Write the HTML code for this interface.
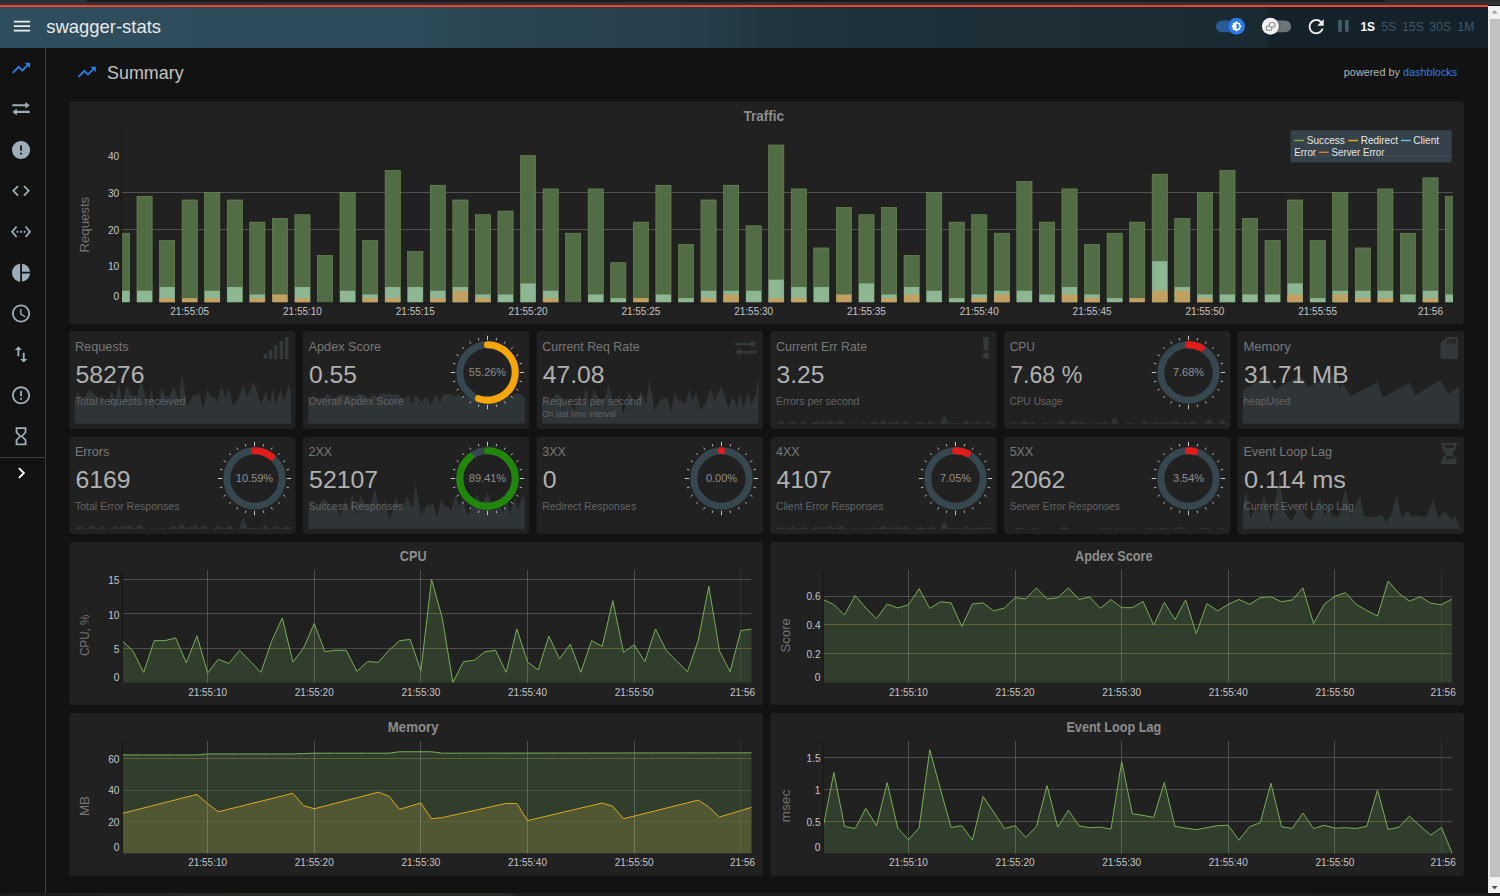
<!DOCTYPE html>
<html lang="en"><head><meta charset="utf-8"><title>swagger-stats</title>
<style>
html,body{margin:0;padding:0}
body{width:1500px;height:896px;overflow:hidden;background:#121212;position:relative;font-family:"Liberation Sans", Arial, sans-serif}
.card{position:absolute;background:#212121;border-radius:3.700px}
svg{position:absolute;left:0;top:0}
svg text{font-family:"Liberation Sans", Arial, sans-serif}
</style></head><body>
<div style="position:absolute;left:0;top:0;width:1500px;height:5px;background:#303335"></div>
<div style="position:absolute;left:0;top:0;width:1500px;height:1.600px;background:linear-gradient(90deg,#27343b 0,#27343b 85px,#1b1b1d 88px,#1b1b1d 1383px,#2c2c2c 1387px,#2c2c2c 1500px)"></div>
<div style="position:absolute;left:0;top:4.700px;width:1488px;height:2.500px;background:#f3412f"></div>
<div style="position:absolute;left:0;top:7.200px;width:1488px;height:40.600px;background:linear-gradient(90deg,#2f4e5d 0,#2e4c5a 400px,#2b4754 470px,#29434f 560px,#273f4b 700px,#22363f 760px,#1e3039 900px,#1d2e37 1050px,#1a2a32 1265px,#16222a 1272px,#15212a 1488px)"></div>
<div style="position:absolute;left:1488px;top:6px;width:12px;height:887px;background:#f1f1f1"></div>
<div style="position:absolute;left:1489.500px;top:19px;width:10.500px;height:858px;background:#c1c1c1"></div>
<div style="position:absolute;left:0;top:893px;width:1500px;height:3px;background:linear-gradient(90deg,#1b1b1b 0,#2a2a22 250px,#2c2a22 500px,#1d1d1d 520px,#1b1b1b 1500px)"></div>
<div style="position:absolute;left:0;top:47.800px;width:45px;height:845.200px;background:#121212;border-right:1px solid #3a3f43"></div>
<div style="position:absolute;left:0;top:457px;width:45px;height:1px;background:#3a3f43"></div>
<svg width="1500" height="896" viewBox="0 0 1500 896">
<rect x="69.2" y="101.3" width="1394.9" height="222.5" rx="3.700" fill="#212121"/>
<rect x="69.2" y="330.9" width="226.4" height="98.1" rx="3.700" fill="#212121"/>
<rect x="69.2" y="436.9" width="226.4" height="97" rx="3.700" fill="#212121"/>
<rect x="302.9" y="330.9" width="226.4" height="98.1" rx="3.700" fill="#212121"/>
<rect x="302.9" y="436.9" width="226.4" height="97" rx="3.700" fill="#212121"/>
<rect x="536.6" y="330.9" width="226.4" height="98.1" rx="3.700" fill="#212121"/>
<rect x="536.6" y="436.9" width="226.4" height="97" rx="3.700" fill="#212121"/>
<rect x="770.3" y="330.9" width="226.4" height="98.1" rx="3.700" fill="#212121"/>
<rect x="770.3" y="436.9" width="226.4" height="97" rx="3.700" fill="#212121"/>
<rect x="1004" y="330.9" width="226.4" height="98.1" rx="3.700" fill="#212121"/>
<rect x="1004" y="436.9" width="226.4" height="97" rx="3.700" fill="#212121"/>
<rect x="1237.7" y="330.9" width="226.4" height="98.1" rx="3.700" fill="#212121"/>
<rect x="1237.7" y="436.9" width="226.4" height="97" rx="3.700" fill="#212121"/>
<rect x="69.2" y="542.1" width="693.9" height="162.9" rx="3.700" fill="#212121"/>
<rect x="770.1" y="542.1" width="694" height="162.9" rx="3.700" fill="#212121"/>
<rect x="69.2" y="713.1" width="693.9" height="162.8" rx="3.700" fill="#212121"/>
<rect x="770.1" y="713.1" width="694" height="162.8" rx="3.700" fill="#212121"/>
<path d="M1491.5 13.500l3-3.500 3 3.500z" fill="#a3a3a3"/>
<path d="M1491.500 886l3 3.500 3-3.500z" fill="#505050"/>
<path transform="translate(11.15 15.25) scale(0.9)" fill="#ececec" d="M3 18h18v-2H3v2zm0-5h18v-2H3v2zm0-7v2h18V6H3z" />
<text x="46.3" y="32.8" font-size="18.4" fill="#e8e8e8" font-weight="normal" text-anchor="start" textLength="114.72" lengthAdjust="spacingAndGlyphs">swagger-stats</text>
<path transform="translate(10.25 57.35) scale(0.9)" fill="#2b7de9" d="M16 6l2.29 2.29-4.88 4.88-4-4L2 16.59 3.41 18l6-6 4 4 6.3-6.29L22 12V6z" />
<path transform="translate(12.400 101.900) scale(0.790 0.820)" fill="#9eaeb8" d="M0 2.800h16.400v-2.800l5.600 4-5.600 4.200v-3h-16.400z M22 10.800h-16.400v-2.800l-5.600 4.200 5.600 4v-2.600h16.400z"/>
<path transform="translate(10.25 139.15) scale(0.9)" fill="#9eaeb8" d="M12 2C6.48 2 2 6.48 2 12s4.48 10 10 10 10-4.48 10-10S17.52 2 12 2zm1 15h-2v-2h2v2zm0-4h-2V7h2v6z" />
<path transform="translate(10.25 180.05) scale(0.9)" fill="#9eaeb8" d="M9.4 16.6L4.8 12l4.6-4.6L8 6l-6 6 6 6 1.4-1.4zm5.2 0l4.6-4.6-4.6-4.6L16 6l6 6-6 6-1.4-1.4z" />
<path transform="translate(10.25 220.95) scale(0.9)" fill="#9eaeb8" d="M7.77 6.76L6.23 5.48.82 12l5.41 6.52 1.54-1.28L3.42 12l4.35-5.24zM7 13h2v-2H7v2zm10-2h-2v2h2v-2zm-6 2h2v-2h-2v2zm6.77-7.52l-1.54 1.28L20.58 12l-4.35 5.24 1.54 1.28L23.18 12l-5.41-6.52z" />
<path transform="translate(10.25 261.85) scale(0.9)" fill="#9eaeb8" d="M11 2v20c-5.07-.5-9-4.79-9-10s3.93-9.5 9-10zm2.03 0v8.99H22c-.47-4.74-4.24-8.52-8.97-8.99zm0 11.01V22c4.74-.47 8.5-4.25 8.97-8.99h-8.97z" />
<path transform="translate(10.25 302.75) scale(0.9)" fill="#9eaeb8" d="M11.99 2C6.47 2 2 6.48 2 12s4.47 10 9.99 10C17.52 22 22 17.52 22 12S17.52 2 11.99 2zM12 20c-4.42 0-8-3.58-8-8s3.58-8 8-8 8 3.58 8 8-3.58 8-8 8zm.5-13H11v6l5.25 3.15.75-1.23-4.5-2.67z" />
<path transform="translate(10.25 343.65) scale(0.9)" fill="#9eaeb8" d="M9 3L5 6.99h3V14h2V6.99h3L9 3zm7 14.01V10h-2v7.01h-3L15 21l4-3.99h-3z" />
<path transform="translate(10.25 384.55) scale(0.9)" fill="#9eaeb8" d="M11 15h2v2h-2zm0-8h2v6h-2zm.99-5C6.47 2 2 6.48 2 12s4.47 10 9.99 10C17.52 22 22 17.52 22 12S17.52 2 11.99 2zM12 20c-4.42 0-8-3.58-8-8s3.58-8 8-8 8 3.58 8 8-3.58 8-8 8z" />
<path transform="translate(10.25 425.45) scale(0.9)" fill="#9eaeb8" d="M6 2v6h.01L6 8.01 10 12l-4 4 .01.01H6V22h12v-5.990h-.01L18 16l-4-4 4-3.990-.01-.01H18V2H6zm10 14.5V20H8v-3.500l4-4 4 4zm-4-5l-4-4V4h8v3.500l-4 4z" />
<path transform="translate(10.4 462) scale(0.92)" fill="#ffffff" d="M10 6L8.59 7.41 13.17 12l-4.58 4.59L10 18l6-6z" />
<rect x="1216" y="20.400" width="29" height="11.800" rx="5.900" fill="#2a5b97"/>
<circle cx="1236.500" cy="26.700" r="9.200" fill="#0d1820" opacity="0.350"/>
<circle cx="1236.500" cy="26.300" r="8.500" fill="#2a7be4"/>
<path transform="translate(1231 20.8) scale(0.46)" fill="#ffffff" d="M20 15.31L23.31 12 20 8.69V4h-4.690L12 .69 8.690 4H4v4.690L.69 12 4 15.310V20h4.690L12 23.310 15.310 20H20v-4.690zM12 18V6c3.310 0 6 2.690 6 6s-2.690 6-6 6z" />
<rect x="1262" y="20.400" width="29" height="11.800" rx="5.900" fill="#6d757b"/>
<circle cx="1270.400" cy="26.800" r="9.200" fill="#0a1218" opacity="0.400"/>
<circle cx="1270.400" cy="26.300" r="8.500" fill="#f0f0f0"/>
<g fill="none" stroke="#8e8e8e" stroke-width="1.100"><rect x="1266.300" y="26" width="5.500" height="4.200" rx="1"/><rect x="1269.400" y="22.800" width="5.500" height="4.200" rx="1.300" fill="#f0f0f0"/></g>
<path transform="translate(1304.95 15.35) scale(0.94)" fill="#ececec" d="M17.65 6.35C16.2 4.9 14.21 4 12 4c-4.42 0-7.99 3.58-7.99 8s3.57 8 7.99 8c3.73 0 6.84-2.55 7.73-6h-2.08c-.82 2.33-3.04 4-5.65 4-3.31 0-6-2.69-6-6s2.69-6 6-6c1.66 0 3.14.69 4.22 1.78L13 11h7V4l-2.350 2.350z" />
<path transform="translate(1333.25 15.65) scale(0.85)" fill="#44606d" d="M6 19h4V5H6v14zm8-14v14h4V5h-4z" />
<text x="1360.4" y="30.5" font-size="12" fill="#ffffff" font-weight="bold" text-anchor="start">1S</text>
<text x="1381.5" y="30.5" font-size="12" fill="#3f5866" font-weight="normal" text-anchor="start">5S</text>
<text x="1402.3" y="30.5" font-size="12" fill="#3f5866" font-weight="normal" text-anchor="start">15S</text>
<text x="1429.6" y="30.5" font-size="12" fill="#3f5866" font-weight="normal" text-anchor="start">30S</text>
<text x="1457.5" y="30.5" font-size="12" fill="#3f5866" font-weight="normal" text-anchor="start">1M</text>
<path transform="translate(75.95 61.35) scale(0.9)" fill="#2b7de9" d="M16 6l2.29 2.29-4.88 4.88-4-4L2 16.59 3.41 18l6-6 4 4 6.3-6.29L22 12V6z" />
<text x="107.1" y="78.5" font-size="18" fill="#c2c2c2" font-weight="normal" text-anchor="start" textLength="76.52" lengthAdjust="spacingAndGlyphs">Summary</text>
<text x="1343.82" y="75.700" font-size="11" textLength="113.38" lengthAdjust="spacingAndGlyphs" fill="#b5b5b5">powered by <tspan fill="#2f7de8">dashblocks</tspan></text>
<path d="M74.57 423.7L74.57 401.41L77.64 391.44L80.7 398.34L84.54 396.81L89.14 389.14L93.74 392.98L97.57 398.34L102.18 396.04L106.78 407.55L111.38 390.67L115.21 401.41L118.59 383.01L122.11 404.48L126.72 386.07L131.32 394.51L136.68 396.81L141.29 380.71L145.89 398.34L148.95 401.41L151.56 389.14L155.86 410.61L161.99 387.61L167.36 401.41L173.49 386.84L178.86 399.88L181.93 374.57L187.3 406.01L193.43 394.51L195.73 396.04L199.57 393.74L203.4 408.31L207.24 389.91L211.84 397.58L214.14 396.81L217.21 401.41L221.81 386.07L225.64 397.58L228.71 388.37L233.31 406.01L237.91 399.88L243.28 384.54L247.11 396.81L254.02 382.24L260.92 403.71L265.52 392.21L269.35 403.71L272.73 389.14L276.26 404.48L280.55 388.37L283.92 401.41L288.53 384.54L291.13 389.91L291.13 423.7Z" fill="#2f3437"/>
<path d="M308.2 423.7L308.2 396.61L311.34 397.21L314.48 397.48L317.62 398.21L320.76 397.2L323.9 398.11L327.03 393.65L330.17 395.83L333.31 398.22L336.45 396.74L339.59 395L342.73 394.07L345.87 395.85L349.01 394.73L352.15 396.22L355.29 396.37L358.43 393.57L361.57 394.58L364.7 394.9L367.84 398.08L370.98 397.33L374.12 394.3L377.26 397.49L380.4 394.19L383.54 393.59L386.68 394.13L389.82 393.51L392.96 394.86L396.1 394.55L399.23 394.58L402.37 398.41L405.51 397.86L408.65 394.95L411.79 405.31L414.93 396.2L418.07 396.89L421.21 401.52L424.35 398.2L427.49 396.95L430.63 405.33L433.77 397.97L436.9 394.99L440.04 402.31L443.18 394.33L446.32 394.23L449.46 393.83L452.6 395.01L455.74 396.52L458.88 393.52L462.02 396.89L465.16 395.19L468.3 395.05L471.43 397.59L474.57 395.9L477.71 395.08L480.85 395.91L483.99 397.02L487.13 393.79L490.27 398.38L493.41 393.61L496.55 397.25L499.69 397.72L502.83 393.59L505.97 397.44L509.1 395.33L512.24 396.39L515.38 393.55L518.52 393.73L521.66 394.4L524.8 398.28L524.8 423.7Z" fill="#2f3437"/>
<path d="M541.97 423.7L541.97 405.21L545.04 395.24L548.1 402.14L551.94 400.61L556.54 392.94L561.14 396.78L564.97 402.14L569.58 399.84L574.18 411.35L578.78 394.47L582.61 405.21L585.99 386.81L589.51 408.28L594.12 389.87L598.72 398.31L604.08 400.61L608.69 384.51L613.29 402.14L616.35 405.21L618.96 392.94L623.26 414.41L629.39 391.41L634.76 405.21L640.89 390.64L646.26 403.68L649.33 378.37L654.7 409.81L660.83 398.31L663.13 399.84L666.97 397.54L670.8 412.11L674.64 393.71L679.24 401.38L681.54 400.61L684.61 405.21L689.21 389.87L693.04 401.38L696.11 392.17L700.71 409.81L705.31 403.68L710.68 388.34L714.51 400.61L721.42 386.04L728.32 407.51L732.92 396.01L736.75 407.51L740.13 392.94L743.66 408.28L747.95 392.17L751.32 405.21L755.93 393.34L758.53 377.4L758.53 423.7Z" fill="#2f3437"/>
<path d="M775.67 423.7L775.67 423.7L776.66 423.43L777.65 422.93L778.63 422.43L779.62 421.92L780.61 421.42L781.6 421.49L782.59 421.99L783.58 422.5L784.57 423L785.56 423.5L786.55 423.7L787.53 423.44L788.52 422.96L789.51 422.47L790.5 421.98L791.49 421.49L792.48 421L793.47 421.43L794.46 421.92L795.45 422.41L796.43 422.9L797.42 423.38L798.41 423.7L799.4 423.63L800.39 423.05L801.38 422.47L802.37 421.89L803.36 421.41L804.35 421.99L805.33 422.57L806.32 423.15L807.31 423.7L808.3 423.7L809.29 423.7L810.28 423.7L811.27 423.48L812.26 423.04L813.25 422.59L814.23 422.14L815.22 421.7L816.21 421.25L817.2 421.61L818.19 422.05L819.18 422.5L820.17 422.95L821.16 422.49L822.15 422.02L823.13 421.55L824.12 421.95L825.11 422.42L826.1 422.68L827.09 422.2L828.08 421.72L829.07 421.24L830.06 420.76L831.05 421.18L832.03 421.66L833.02 422.14L834.01 422.62L835 423.1L835.99 423.16L836.98 422.6L837.97 422.05L838.96 421.49L839.95 420.93L840.93 420.47L841.92 421.03L842.91 421.58L843.9 422.14L844.89 422.69L845.88 423.25L846.87 423.7L847.86 423.7L848.85 423.7L849.83 423.7L850.82 423.7L851.81 423.58L852.8 423.27L853.79 422.95L854.78 423.2L855.77 423.52L856.76 423.7L857.75 423.7L858.73 423.7L859.72 423.7L860.71 423.45L861.7 423.16L862.69 422.87L863.68 422.58L864.67 422.77L865.66 423.06L866.64 423.35L867.63 423.64L868.62 423.65L869.61 423.32L870.6 422.99L871.59 422.67L872.58 422.34L873.57 422.01L874.56 421.68L875.54 421.99L876.53 422.31L877.52 422.64L878.51 422.97L879.5 422.79L880.49 421.95L881.48 421.12L882.47 420.28L883.46 420.16L884.44 421L885.43 421.84L886.42 422.68L887.41 423.47L888.4 423.05L889.39 422.63L890.38 422.21L891.37 421.79L892.36 422.13L893.34 422.55L894.33 422.89L895.32 421.98L896.31 421.06L897.3 421.01L898.29 421.93L899.28 422.84L900.27 423.44L901.26 422.95L902.24 422.47L903.23 421.98L904.22 421.49L905.21 421L906.2 421.43L907.19 421.92L908.18 422.41L909.17 422.9L910.16 423.39L911.14 423.7L912.13 423.7L913.12 423.7L914.11 423.46L915.1 423.12L916.09 422.79L917.08 422.45L918.07 422.12L919.06 421.78L920.04 421.59L921.03 421.92L922.02 422.26L923.01 422.59L924 422.93L924.99 423.26L925.98 423.53L926.97 422.98L927.96 422.43L928.94 421.88L929.93 421.33L930.92 421.16L931.91 421.71L932.9 422.26L933.89 422.81L934.88 423.36L935.87 423.7L936.86 423.7L937.84 423.7L938.83 423.7L939.82 423.7L940.81 422.41L941.8 420.17L942.79 417.94L943.78 415.7L944.77 415.21L945.76 417.45L946.74 419.68L947.73 421.92L948.72 423.04L949.71 422.89L950.7 422.79L951.69 422.94L952.68 423.09L953.67 423.24L954.66 423.4L955.64 423.35L956.63 423.18L957.62 423.02L958.61 422.99L959.6 423.16L960.59 423.33L961.58 423.5L962.57 423.66L963.56 422.88L964.54 422L965.53 421.12L966.52 420.61L967.51 421.49L968.5 422.37L969.49 423.25L970.48 423.7L971.47 423.53L972.45 423.23L973.44 422.93L974.43 422.63L975.42 422.34L976.41 422.04L977.4 421.76L978.39 422.06L979.38 422.36L980.37 422.66L981.35 422.96L982.34 423.26L983.33 423.56L984.32 423.19L985.31 422.75L986.3 422.31L987.29 421.87L988.28 421.6L989.27 422.04L990.25 422.48L991.24 422.92L992.23 423.36L992.23 423.7Z" fill="#2f3437"/>
<path d="M1009.37 423.7L1009.37 423.45L1010.36 423.13L1011.35 422.81L1012.33 422.48L1013.32 422.24L1014.31 422.56L1015.3 422.88L1016.29 423.21L1017.28 423.53L1018.27 423.53L1019.26 423.18L1020.25 422.82L1021.23 422.47L1022.22 422.12L1023.21 421.76L1024.2 421.59L1025.19 421.95L1026.18 422.3L1027.17 422.66L1028.16 423.01L1029.15 423.16L1030.13 422.78L1031.12 422.39L1032.11 422L1033.1 422.18L1034.09 422.57L1035.08 422.96L1036.07 423.34L1037.06 423.7L1038.05 423.7L1039.03 423.6L1040.02 423.41L1041.01 423.23L1042 423.04L1042.99 422.86L1043.98 422.67L1044.97 422.48L1045.96 422.5L1046.95 422.69L1047.93 422.88L1048.92 423.06L1049.91 423.25L1050.9 423.43L1051.89 423.62L1052.88 423.7L1053.87 423.7L1054.86 423.7L1055.85 423.7L1056.83 423.37L1057.82 422.77L1058.81 422.16L1059.8 421.55L1060.79 420.95L1061.78 420.66L1062.77 421.27L1063.76 421.88L1064.75 422.48L1065.73 423.09L1066.72 423.7L1067.71 423.67L1068.7 423.22L1069.69 422.77L1070.68 422.32L1071.67 421.87L1072.66 421.42L1073.65 420.96L1074.63 421.29L1075.62 421.74L1076.61 422.19L1077.6 422.64L1078.59 423.09L1079.58 423.23L1080.57 422.85L1081.56 422.46L1082.55 422.07L1083.53 422.11L1084.52 422.5L1085.51 422.89L1086.5 423.27L1087.49 423.66L1088.48 423.7L1089.47 423.7L1090.46 423.7L1091.45 423.7L1092.43 423.49L1093.42 423.28L1094.41 423.07L1095.4 422.86L1096.39 422.65L1097.38 422.44L1098.37 422.57L1099.36 422.78L1100.34 422.99L1101.33 423.2L1102.32 422.89L1103.31 422.42L1104.3 421.94L1105.29 421.53L1106.28 422L1107.27 422.48L1108.26 422.95L1109.24 423.42L1110.23 423.7L1111.22 422.87L1112.21 421.13L1113.2 419.4L1114.19 417.66L1115.18 417.48L1116.17 419.21L1117.16 420.95L1118.14 422.68L1119.13 423.7L1120.12 423.7L1121.11 423.7L1122.1 423.7L1123.09 423.7L1124.08 423.7L1125.07 423.58L1126.06 423.41L1127.04 423.24L1128.03 423.07L1129.02 422.9L1130.01 422.72L1131 422.55L1131.99 422.62L1132.98 422.79L1133.97 422.96L1134.96 423.14L1135.94 423.31L1136.93 423.48L1137.92 423.65L1138.91 423.7L1139.9 423.7L1140.89 423.4L1141.88 422.86L1142.87 422.31L1143.86 421.77L1144.84 421.78L1145.83 422.33L1146.82 422.87L1147.81 423.42L1148.8 423.7L1149.79 423.7L1150.78 423.52L1151.77 423.12L1152.76 422.73L1153.74 422.34L1154.73 421.94L1155.72 421.55L1156.71 421.85L1157.7 422.24L1158.69 422.63L1159.68 423.03L1160.67 423.42L1161.66 423.11L1162.64 422.62L1163.63 422.26L1164.62 422.74L1165.61 423.23L1166.6 423.36L1167.59 422.93L1168.58 422.5L1169.57 422.07L1170.56 421.76L1171.54 422.19L1172.53 422.62L1173.52 422.6L1174.51 421.92L1175.5 421.23L1176.49 420.54L1177.48 421.15L1178.47 421.84L1179.46 422.52L1180.44 423.21L1181.43 423.29L1182.42 422.9L1183.41 422.51L1184.4 422.13L1185.39 422.06L1186.38 422.45L1187.37 422.83L1188.36 423.22L1189.34 423.02L1190.33 422.55L1191.32 422.09L1192.31 421.62L1193.3 421.16L1194.29 421.51L1195.28 421.98L1196.27 422.44L1197.26 422.91L1198.24 423.37L1199.23 423.7L1200.22 423.7L1201.21 423.7L1202.2 423.7L1203.19 423.7L1204.18 423.7L1205.17 422.94L1206.15 422.07L1207.14 421.2L1208.13 420.33L1209.12 419.45L1210.11 419.62L1211.1 420.49L1212.09 421.36L1213.08 422.24L1214.07 423.11L1215.05 423.7L1216.04 423.7L1217.03 423.7L1218.02 423.7L1219.01 423.24L1220 422.2L1220.99 421.15L1221.98 420.11L1222.97 419.93L1223.95 420.97L1224.94 422.01L1225.93 423.05L1225.93 423.7Z" fill="#2f3437"/>
<path d="M1242.83 423.7L1242.83 390.58L1267.37 375.25L1275.04 389.82L1300.35 375.55L1308.02 386.75L1334.09 374.48L1339.46 387.52L1343.29 383.68L1350.2 395.95L1377.8 382.15L1382.87 397.18L1409.25 382.91L1415.38 395.18L1440.23 380.15L1448.36 393.65L1459.4 387.06L1459.4 423.7Z" fill="#2f3437"/>
<path d="M74.57 528.9L74.57 528.9L75.56 528.56L76.55 527.91L77.53 527.27L78.52 526.62L79.51 525.98L80.5 526.07L81.49 526.71L82.48 527.36L83.47 528L84.46 528.65L85.45 528.9L86.43 528.57L87.42 527.95L88.41 527.32L89.4 526.69L90.39 526.07L91.38 525.44L92.37 525.99L93.36 526.62L94.35 527.24L95.33 527.87L96.32 528.5L97.31 528.9L98.3 528.81L99.29 528.07L100.28 527.33L101.27 526.58L102.26 525.96L103.25 526.71L104.23 527.45L105.22 528.19L106.21 528.9L107.2 528.9L108.19 528.9L109.18 528.9L110.17 528.62L111.16 528.05L112.15 527.48L113.13 526.9L114.12 526.33L115.11 525.76L116.1 526.22L117.09 526.79L118.08 527.36L119.07 527.93L120.06 527.35L121.05 526.75L122.03 526.15L123.02 526.65L124.01 527.25L125 527.59L125.99 526.97L126.98 526.36L127.97 525.75L128.96 525.14L129.95 525.68L130.93 526.29L131.92 526.9L132.91 527.51L133.9 528.13L134.89 528.2L135.88 527.49L136.87 526.78L137.86 526.07L138.85 525.35L139.83 524.76L140.82 525.47L141.81 526.18L142.8 526.9L143.79 527.61L144.78 528.32L145.77 528.9L146.76 528.9L147.75 528.9L148.73 528.9L149.72 528.9L150.71 528.75L151.7 528.34L152.69 527.94L153.68 528.26L154.67 528.67L155.66 528.9L156.65 528.9L157.63 528.9L158.62 528.9L159.61 528.58L160.6 528.21L161.59 527.84L162.58 527.47L163.57 527.7L164.56 528.08L165.54 528.45L166.53 528.82L167.52 528.83L168.51 528.41L169.5 527.99L170.49 527.57L171.48 527.15L172.47 526.74L173.46 526.32L174.44 526.7L175.43 527.12L176.42 527.54L177.41 527.96L178.4 527.74L179.39 526.66L180.38 525.59L181.37 524.51L182.36 524.36L183.34 525.44L184.33 526.51L185.32 527.59L186.31 528.6L187.3 528.07L188.29 527.53L189.28 526.99L190.27 526.45L191.26 526.88L192.24 527.42L193.23 527.86L194.22 526.69L195.21 525.52L196.2 525.45L197.19 526.63L198.18 527.8L199.17 528.57L200.16 527.94L201.14 527.32L202.13 526.69L203.12 526.06L204.11 525.44L205.1 525.99L206.09 526.62L207.08 527.24L208.07 527.87L209.06 528.5L210.04 528.9L211.03 528.9L212.02 528.9L213.01 528.59L214 528.16L214.99 527.73L215.98 527.3L216.97 526.87L217.96 526.44L218.94 526.19L219.93 526.62L220.92 527.05L221.91 527.48L222.9 527.91L223.89 528.34L224.88 528.68L225.87 527.97L226.86 527.27L227.84 526.56L228.83 525.86L229.82 525.65L230.81 526.35L231.8 527.06L232.79 527.76L233.78 528.47L234.77 528.9L235.76 528.9L236.74 528.9L237.73 528.9L238.72 528.9L239.71 527.24L240.7 524.38L241.69 521.51L242.68 518.65L243.67 518.02L244.66 520.89L245.64 523.75L246.63 526.62L247.62 528.05L248.61 527.86L249.6 527.74L250.59 527.93L251.58 528.12L252.57 528.32L253.56 528.51L254.54 528.45L255.53 528.24L256.52 528.02L257.51 527.99L258.5 528.21L259.49 528.42L260.48 528.64L261.47 528.85L262.46 527.85L263.44 526.72L264.43 525.59L265.42 524.94L266.41 526.07L267.4 527.2L268.39 528.32L269.38 528.9L270.37 528.69L271.35 528.3L272.34 527.92L273.33 527.53L274.32 527.15L275.31 526.77L276.3 526.42L277.29 526.8L278.28 527.18L279.27 527.57L280.25 527.95L281.24 528.34L282.23 528.72L283.22 528.25L284.21 527.69L285.2 527.12L286.19 526.56L287.18 526.21L288.17 526.77L289.15 527.33L290.14 527.9L291.13 528.46L291.13 528.9Z" fill="#2f3437"/>
<path d="M308.27 528.9L308.27 510.91L311.34 500.94L314.4 507.84L318.24 506.31L322.84 498.64L327.44 502.48L331.27 507.84L335.88 505.54L340.48 517.05L345.08 500.17L348.91 510.91L352.29 492.51L355.81 513.98L360.42 495.57L365.02 504.01L370.38 506.31L374.99 490.21L379.59 507.84L382.65 510.91L385.26 498.64L389.56 520.11L395.69 497.11L401.06 510.91L407.19 496.34L412.56 509.38L415.63 484.07L421 515.51L427.13 504.01L429.43 505.54L433.27 503.24L437.1 517.81L440.94 499.41L445.54 507.08L447.84 506.31L450.91 510.91L455.51 495.57L459.34 507.08L462.41 497.87L467.01 515.51L471.61 509.38L476.98 494.04L480.81 506.31L487.72 491.74L494.62 513.21L499.22 501.71L503.05 513.21L506.43 498.64L509.96 513.98L514.25 497.87L517.62 510.91L522.23 494.04L524.83 499.41L524.83 528.9Z" fill="#2f3437"/>
<path d="M775.67 528.9L775.67 528.9L776.66 528.67L777.65 528.23L778.63 527.79L779.62 527.35L780.61 526.91L781.6 526.97L782.59 527.41L783.58 527.85L784.57 528.29L785.56 528.73L786.55 528.9L787.53 528.68L788.52 528.25L789.51 527.82L790.5 527.4L791.49 526.97L792.48 526.55L793.47 526.92L794.46 527.35L795.45 527.77L796.43 528.2L797.42 528.63L798.41 528.9L799.4 528.84L800.39 528.34L801.38 527.83L802.37 527.32L803.36 526.9L804.35 527.41L805.33 527.91L806.32 528.42L807.31 528.9L808.3 528.9L809.29 528.9L810.28 528.9L811.27 528.71L812.26 528.32L813.25 527.93L814.23 527.54L815.22 527.15L816.21 526.76L817.2 527.07L818.19 527.46L819.18 527.85L820.17 528.24L821.16 527.85L822.15 527.44L823.13 527.03L824.12 527.37L825.11 527.78L826.1 528.01L827.09 527.59L828.08 527.17L829.07 526.76L830.06 526.34L831.05 526.71L832.03 527.12L833.02 527.54L834.01 527.96L835 528.37L835.99 528.43L836.98 527.94L837.97 527.46L838.96 526.97L839.95 526.49L840.93 526.08L841.92 526.57L842.91 527.05L843.9 527.54L844.89 528.02L845.88 528.51L846.87 528.9L847.86 528.9L848.85 528.9L849.83 528.9L850.82 528.9L851.81 528.8L852.8 528.52L853.79 528.25L854.78 528.47L855.77 528.74L856.76 528.9L857.75 528.9L858.73 528.9L859.72 528.9L860.71 528.68L861.7 528.43L862.69 528.18L863.68 527.93L864.67 528.09L865.66 528.34L866.64 528.59L867.63 528.85L868.62 528.85L869.61 528.57L870.6 528.28L871.59 528L872.58 527.71L873.57 527.43L874.56 527.14L875.54 527.41L876.53 527.69L877.52 527.98L878.51 528.26L879.5 528.11L880.49 527.38L881.48 526.65L882.47 525.92L883.46 525.81L884.44 526.55L885.43 527.28L886.42 528.01L887.41 528.7L888.4 528.33L889.39 527.97L890.38 527.6L891.37 527.24L892.36 527.53L893.34 527.89L894.33 528.2L895.32 527.4L896.31 526.6L897.3 526.56L898.29 527.35L899.28 528.15L900.27 528.68L901.26 528.25L902.24 527.82L903.23 527.4L904.22 526.97L905.21 526.55L906.2 526.92L907.19 527.35L908.18 527.77L909.17 528.2L910.16 528.63L911.14 528.9L912.13 528.9L913.12 528.9L914.11 528.69L915.1 528.4L916.09 528.1L917.08 527.81L918.07 527.52L919.06 527.23L920.04 527.06L921.03 527.35L922.02 527.64L923.01 527.93L924 528.23L924.99 528.52L925.98 528.75L926.97 528.27L927.96 527.79L928.94 527.31L929.93 526.83L930.92 526.69L931.91 527.17L932.9 527.65L933.89 528.13L934.88 528.61L935.87 528.9L936.86 528.9L937.84 528.9L938.83 528.9L939.82 528.9L940.81 527.77L941.8 525.82L942.79 523.88L943.78 521.93L944.77 521.5L945.76 523.45L946.74 525.4L947.73 527.35L948.72 528.32L949.71 528.19L950.7 528.11L951.69 528.24L952.68 528.37L953.67 528.5L954.66 528.63L955.64 528.6L956.63 528.45L957.62 528.3L958.61 528.28L959.6 528.43L960.59 528.58L961.58 528.72L962.57 528.87L963.56 528.18L964.54 527.42L965.53 526.65L966.52 526.21L967.51 526.97L968.5 527.74L969.49 528.51L970.48 528.9L971.47 528.75L972.45 528.49L973.44 528.23L974.43 527.97L975.42 527.71L976.41 527.45L977.4 527.21L978.39 527.47L979.38 527.73L980.37 527.99L981.35 528.26L982.34 528.52L983.33 528.78L984.32 528.46L985.31 528.07L986.3 527.69L987.29 527.31L988.28 527.07L989.27 527.45L990.25 527.84L991.24 528.22L992.23 528.6L992.23 528.9Z" fill="#2f3437"/>
<path d="M1009.37 528.9L1009.37 528.9L1010.36 528.9L1011.35 528.9L1012.33 528.9L1013.32 528.88L1014.31 528.68L1015.3 528.49L1016.29 528.3L1017.28 528.1L1018.27 527.91L1019.26 527.72L1020.25 527.88L1021.23 528.07L1022.22 528.26L1023.21 528.46L1024.2 528.65L1025.19 528.84L1026.18 528.9L1027.17 528.9L1028.16 528.9L1029.15 528.9L1030.13 528.9L1031.12 528.77L1032.11 528.47L1033.1 528.17L1034.09 527.86L1035.08 527.56L1036.07 527.74L1037.06 528.04L1038.05 528.34L1039.03 528.64L1040.02 528.9L1041.01 528.9L1042 528.9L1042.99 528.9L1043.98 528.9L1044.97 528.9L1045.96 528.9L1046.95 528.9L1047.93 528.9L1048.92 528.9L1049.91 528.9L1050.9 528.9L1051.89 528.9L1052.88 528.9L1053.87 528.9L1054.86 528.9L1055.85 528.9L1056.83 528.9L1057.82 528.9L1058.81 528.83L1059.8 528.51L1060.79 528.19L1061.78 527.86L1062.77 527.54L1063.76 527.22L1064.75 527.3L1065.73 527.63L1066.72 527.95L1067.71 528.27L1068.7 528.59L1069.69 528.9L1070.68 528.9L1071.67 528.9L1072.66 528.9L1073.65 528.9L1074.63 528.9L1075.62 528.9L1076.61 528.9L1077.6 528.9L1078.59 528.9L1079.58 528.9L1080.57 528.9L1081.56 528.9L1082.55 528.9L1083.53 528.9L1084.52 528.9L1085.51 528.9L1086.5 528.9L1087.49 528.9L1088.48 528.9L1089.47 528.9L1090.46 528.9L1091.45 528.9L1092.43 528.9L1093.42 528.9L1094.41 528.9L1095.4 528.9L1096.39 528.9L1097.38 528.9L1098.37 528.9L1099.36 528.9L1100.34 528.77L1101.33 528.61L1102.32 528.45L1103.31 528.29L1104.3 528.13L1105.29 527.96L1106.28 528L1107.27 528.16L1108.26 528.32L1109.24 528.48L1110.23 528.64L1111.22 528.8L1112.21 528.9L1113.2 528.85L1114.19 528.68L1115.18 528.5L1116.17 528.33L1117.16 528.16L1118.14 528.21L1119.13 528.38L1120.12 528.56L1121.11 528.73L1122.1 528.9L1123.09 528.9L1124.08 528.78L1125.07 528.53L1126.06 528.27L1127.04 528.01L1128.03 527.75L1129.02 527.91L1130.01 528.16L1131 528.42L1131.99 528.68L1132.98 528.9L1133.97 528.9L1134.96 528.9L1135.94 528.9L1136.93 528.9L1137.92 528.9L1138.91 528.9L1139.9 528.9L1140.89 528.9L1141.88 528.9L1142.87 528.9L1143.86 528.9L1144.84 528.9L1145.83 528.74L1146.82 528.53L1147.81 528.31L1148.8 528.1L1149.79 527.88L1150.78 527.73L1151.77 527.95L1152.76 528.16L1153.74 528.38L1154.73 528.59L1155.72 528.81L1156.71 528.9L1157.7 528.9L1158.69 528.9L1159.68 528.64L1160.67 528.36L1161.66 528.08L1162.64 527.8L1163.63 527.68L1164.62 527.96L1165.61 528.24L1166.6 528.52L1167.59 528.8L1168.58 528.9L1169.57 528.9L1170.56 528.9L1171.54 528.9L1172.53 528.82L1173.52 528.54L1174.51 528.26L1175.5 527.98L1176.49 527.7L1177.48 527.42L1178.47 527.14L1179.46 526.94L1180.44 527.22L1181.43 527.5L1182.42 527.78L1183.41 528.06L1184.4 528.34L1185.39 528.62L1186.38 528.9L1187.37 528.9L1188.36 528.9L1189.34 528.9L1190.33 528.9L1191.32 528.9L1192.31 528.9L1193.3 528.9L1194.29 528.9L1195.28 528.9L1196.27 528.9L1197.26 528.9L1198.24 528.9L1199.23 528.81L1200.22 528.62L1201.21 528.43L1202.2 528.23L1203.19 528.04L1204.18 527.85L1205.17 527.75L1206.15 527.94L1207.14 528.13L1208.13 528.33L1209.12 528.52L1210.11 528.72L1211.1 528.9L1212.09 528.9L1213.08 528.9L1214.07 528.9L1215.05 528.9L1216.04 528.9L1217.03 528.77L1218.02 528.55L1219.01 528.34L1220 528.12L1220.99 527.91L1221.98 528.11L1222.97 528.32L1223.95 528.54L1224.94 528.75L1225.93 528.9L1225.93 528.9Z" fill="#2f3437"/>
<path d="M1242.83 528.9L1242.83 506.55L1245.9 490.45L1250.5 518.06L1255.1 508.09L1258.94 512.69L1264.31 495.05L1271.21 521.89L1279.18 478.18L1285.01 512.69L1291.91 521.89L1299.58 503.48L1304.95 515.75L1311.09 520.36L1319.52 497.35L1324.89 515.75L1327.96 508.09L1332.56 515.75L1338.69 517.29L1345.29 488.91L1350.96 514.22L1360.17 495.05L1364 516.52L1372.44 517.29L1381.64 514.99L1386.24 522.66L1390.84 515.75L1396.52 495.05L1401.58 517.29L1407.71 510.39L1411.55 516.52L1416.91 515.75L1426.12 517.29L1433.48 498.88L1438.39 518.82L1444.52 511.15L1451.42 519.59L1455.26 516.52L1459.4 528.79L1459.4 528.9Z" fill="#2f3437"/>
<text x="74.9" y="350.6" font-size="12.83" fill="#787878" font-weight="normal" text-anchor="start" textLength="53.79" lengthAdjust="spacingAndGlyphs">Requests</text>
<text x="75.4" y="382.7" font-size="24.6" fill="#b0b0b0" font-weight="normal" text-anchor="start" textLength="69.06" lengthAdjust="spacingAndGlyphs">58276</text>
<text x="74.9" y="404.5" font-size="10.8" fill="#636363" font-weight="normal" text-anchor="start" textLength="110.5" lengthAdjust="spacingAndGlyphs">Total requests received</text>
<text x="308.6" y="350.6" font-size="12.83" fill="#787878" font-weight="normal" text-anchor="start" textLength="72.58" lengthAdjust="spacingAndGlyphs">Apdex Score</text>
<text x="309.1" y="382.7" font-size="24.6" fill="#b0b0b0" font-weight="normal" text-anchor="start" textLength="47.91" lengthAdjust="spacingAndGlyphs">0.55</text>
<text x="308.6" y="404.5" font-size="10.8" fill="#636363" font-weight="normal" text-anchor="start" textLength="94.85" lengthAdjust="spacingAndGlyphs">Overall Apdex Score</text>
<text x="542.3" y="350.6" font-size="12.83" fill="#787878" font-weight="normal" text-anchor="start" textLength="97.31" lengthAdjust="spacingAndGlyphs">Current Req Rate</text>
<text x="542.8" y="382.7" font-size="24.6" fill="#b0b0b0" font-weight="normal" text-anchor="start" textLength="61.72" lengthAdjust="spacingAndGlyphs">47.08</text>
<text x="542.3" y="404.5" font-size="10.8" fill="#636363" font-weight="normal" text-anchor="start" textLength="99.22" lengthAdjust="spacingAndGlyphs">Requests per second</text>
<text x="542.3" y="417.4" font-size="8.3" fill="#636363" font-weight="normal" text-anchor="start" textLength="73.46" lengthAdjust="spacingAndGlyphs">On last time interval</text>
<text x="776" y="350.6" font-size="12.83" fill="#787878" font-weight="normal" text-anchor="start" textLength="91.22" lengthAdjust="spacingAndGlyphs">Current Err Rate</text>
<text x="776.5" y="382.7" font-size="24.6" fill="#b0b0b0" font-weight="normal" text-anchor="start" textLength="47.91" lengthAdjust="spacingAndGlyphs">3.25</text>
<text x="776" y="404.5" font-size="10.8" fill="#636363" font-weight="normal" text-anchor="start" textLength="83.42" lengthAdjust="spacingAndGlyphs">Errors per second</text>
<text x="1009.7" y="350.6" font-size="12.83" fill="#787878" font-weight="normal" text-anchor="start" textLength="24.99" lengthAdjust="spacingAndGlyphs">CPU</text>
<text x="1010.2" y="382.7" font-size="24.6" fill="#b0b0b0" font-weight="normal" text-anchor="start" textLength="72.02" lengthAdjust="spacingAndGlyphs">7.68 %</text>
<text x="1009.7" y="404.5" font-size="10.8" fill="#636363" font-weight="normal" text-anchor="start" textLength="52.91" lengthAdjust="spacingAndGlyphs">CPU Usage</text>
<text x="1243.4" y="350.6" font-size="12.83" fill="#787878" font-weight="normal" text-anchor="start" textLength="47.4" lengthAdjust="spacingAndGlyphs">Memory</text>
<text x="1243.9" y="382.7" font-size="24.6" fill="#b0b0b0" font-weight="normal" text-anchor="start" textLength="104.62" lengthAdjust="spacingAndGlyphs">31.71 MB</text>
<text x="1243.4" y="404.5" font-size="10.8" fill="#636363" font-weight="normal" text-anchor="start" textLength="47.24" lengthAdjust="spacingAndGlyphs">heapUsed</text>
<text x="74.9" y="456.2" font-size="12.83" fill="#787878" font-weight="normal" text-anchor="start" textLength="34.55" lengthAdjust="spacingAndGlyphs">Errors</text>
<text x="75.4" y="488.3" font-size="24.6" fill="#b0b0b0" font-weight="normal" text-anchor="start" textLength="55.25" lengthAdjust="spacingAndGlyphs">6169</text>
<text x="74.9" y="510.1" font-size="10.8" fill="#636363" font-weight="normal" text-anchor="start" textLength="104.56" lengthAdjust="spacingAndGlyphs">Total Error Responses</text>
<text x="308.6" y="456.2" font-size="12.83" fill="#787878" font-weight="normal" text-anchor="start" textLength="23.51" lengthAdjust="spacingAndGlyphs">2XX</text>
<text x="309.1" y="488.3" font-size="24.6" fill="#b0b0b0" font-weight="normal" text-anchor="start" textLength="69.06" lengthAdjust="spacingAndGlyphs">52107</text>
<text x="308.6" y="510.1" font-size="10.8" fill="#636363" font-weight="normal" text-anchor="start" textLength="94.68" lengthAdjust="spacingAndGlyphs">Success Responses</text>
<text x="542.3" y="456.2" font-size="12.83" fill="#787878" font-weight="normal" text-anchor="start" textLength="23.51" lengthAdjust="spacingAndGlyphs">3XX</text>
<text x="542.8" y="488.3" font-size="24.6" fill="#b0b0b0" font-weight="normal" text-anchor="start" textLength="13.81" lengthAdjust="spacingAndGlyphs">0</text>
<text x="542.3" y="510.1" font-size="10.8" fill="#636363" font-weight="normal" text-anchor="start" textLength="93.82" lengthAdjust="spacingAndGlyphs">Redirect Responses</text>
<text x="776" y="456.2" font-size="12.83" fill="#787878" font-weight="normal" text-anchor="start" textLength="23.51" lengthAdjust="spacingAndGlyphs">4XX</text>
<text x="776.5" y="488.3" font-size="24.6" fill="#b0b0b0" font-weight="normal" text-anchor="start" textLength="55.25" lengthAdjust="spacingAndGlyphs">4107</text>
<text x="776" y="510.1" font-size="10.8" fill="#636363" font-weight="normal" text-anchor="start" textLength="107.37" lengthAdjust="spacingAndGlyphs">Client Error Responses</text>
<text x="1009.7" y="456.2" font-size="12.83" fill="#787878" font-weight="normal" text-anchor="start" textLength="23.51" lengthAdjust="spacingAndGlyphs">5XX</text>
<text x="1010.2" y="488.3" font-size="24.6" fill="#b0b0b0" font-weight="normal" text-anchor="start" textLength="55.25" lengthAdjust="spacingAndGlyphs">2062</text>
<text x="1009.7" y="510.1" font-size="10.8" fill="#636363" font-weight="normal" text-anchor="start" textLength="110.21" lengthAdjust="spacingAndGlyphs">Server Error Responses</text>
<text x="1243.4" y="456.2" font-size="12.83" fill="#787878" font-weight="normal" text-anchor="start" textLength="88.57" lengthAdjust="spacingAndGlyphs">Event Loop Lag</text>
<text x="1243.9" y="488.3" font-size="24.6" fill="#b0b0b0" font-weight="normal" text-anchor="start" textLength="102.07" lengthAdjust="spacingAndGlyphs">0.114 ms</text>
<text x="1243.4" y="510.1" font-size="10.8" fill="#636363" font-weight="normal" text-anchor="start" textLength="110.28" lengthAdjust="spacingAndGlyphs">Current Event Loop Lag</text>
<line x1="487.5" y1="340.2" x2="487.5" y2="335.8" stroke="#c6c6c6" stroke-width="1"/>
<line x1="496.09" y1="340.43" x2="496.74" y2="338.02" stroke="#c6c6c6" stroke-width="0.900"/>
<line x1="504.1" y1="343.75" x2="505.35" y2="341.58" stroke="#c6c6c6" stroke-width="0.900"/>
<line x1="510.98" y1="349.02" x2="512.74" y2="347.26" stroke="#c6c6c6" stroke-width="0.900"/>
<line x1="516.25" y1="355.9" x2="518.42" y2="354.65" stroke="#c6c6c6" stroke-width="0.900"/>
<line x1="519.57" y1="363.91" x2="521.98" y2="363.26" stroke="#c6c6c6" stroke-width="0.900"/>
<line x1="519.8" y1="372.5" x2="524.2" y2="372.5" stroke="#c6c6c6" stroke-width="1"/>
<line x1="519.57" y1="381.09" x2="521.98" y2="381.74" stroke="#c6c6c6" stroke-width="0.900"/>
<line x1="516.25" y1="389.1" x2="518.42" y2="390.35" stroke="#c6c6c6" stroke-width="0.900"/>
<line x1="510.98" y1="395.98" x2="512.74" y2="397.74" stroke="#c6c6c6" stroke-width="0.900"/>
<line x1="504.1" y1="401.25" x2="505.35" y2="403.42" stroke="#c6c6c6" stroke-width="0.900"/>
<line x1="496.09" y1="404.57" x2="496.74" y2="406.98" stroke="#c6c6c6" stroke-width="0.900"/>
<line x1="487.5" y1="404.8" x2="487.5" y2="409.2" stroke="#c6c6c6" stroke-width="1"/>
<line x1="478.91" y1="404.57" x2="478.26" y2="406.98" stroke="#c6c6c6" stroke-width="0.900"/>
<line x1="470.9" y1="401.25" x2="469.65" y2="403.42" stroke="#c6c6c6" stroke-width="0.900"/>
<line x1="464.02" y1="395.98" x2="462.26" y2="397.74" stroke="#c6c6c6" stroke-width="0.900"/>
<line x1="458.75" y1="389.1" x2="456.58" y2="390.35" stroke="#c6c6c6" stroke-width="0.900"/>
<line x1="455.43" y1="381.09" x2="453.02" y2="381.74" stroke="#c6c6c6" stroke-width="0.900"/>
<line x1="455.2" y1="372.5" x2="450.8" y2="372.5" stroke="#c6c6c6" stroke-width="1"/>
<line x1="455.43" y1="363.91" x2="453.02" y2="363.26" stroke="#c6c6c6" stroke-width="0.900"/>
<line x1="458.75" y1="355.9" x2="456.58" y2="354.65" stroke="#c6c6c6" stroke-width="0.900"/>
<line x1="464.02" y1="349.02" x2="462.26" y2="347.26" stroke="#c6c6c6" stroke-width="0.900"/>
<line x1="470.9" y1="343.75" x2="469.65" y2="341.58" stroke="#c6c6c6" stroke-width="0.900"/>
<line x1="478.91" y1="340.43" x2="478.26" y2="338.02" stroke="#c6c6c6" stroke-width="0.900"/>
<circle cx="487.5" cy="372.5" r="27.7" fill="none" stroke="#37474f" stroke-width="7"/>
<path d="M487.5 344.8A27.7 27.7 0 1 1 478.51 398.7" fill="none" stroke="#f6a609" stroke-width="7" stroke-linecap="round"/>
<text x="487.5" y="376.2" font-size="11" fill="#8f8f8f" font-weight="normal" text-anchor="middle">55.26%</text>
<line x1="1188.5" y1="340.2" x2="1188.5" y2="335.8" stroke="#c6c6c6" stroke-width="1"/>
<line x1="1197.09" y1="340.43" x2="1197.74" y2="338.02" stroke="#c6c6c6" stroke-width="0.900"/>
<line x1="1205.1" y1="343.75" x2="1206.35" y2="341.58" stroke="#c6c6c6" stroke-width="0.900"/>
<line x1="1211.98" y1="349.02" x2="1213.74" y2="347.26" stroke="#c6c6c6" stroke-width="0.900"/>
<line x1="1217.25" y1="355.9" x2="1219.42" y2="354.65" stroke="#c6c6c6" stroke-width="0.900"/>
<line x1="1220.57" y1="363.91" x2="1222.98" y2="363.26" stroke="#c6c6c6" stroke-width="0.900"/>
<line x1="1220.8" y1="372.5" x2="1225.2" y2="372.5" stroke="#c6c6c6" stroke-width="1"/>
<line x1="1220.57" y1="381.09" x2="1222.98" y2="381.74" stroke="#c6c6c6" stroke-width="0.900"/>
<line x1="1217.25" y1="389.1" x2="1219.42" y2="390.35" stroke="#c6c6c6" stroke-width="0.900"/>
<line x1="1211.98" y1="395.98" x2="1213.74" y2="397.74" stroke="#c6c6c6" stroke-width="0.900"/>
<line x1="1205.1" y1="401.25" x2="1206.35" y2="403.42" stroke="#c6c6c6" stroke-width="0.900"/>
<line x1="1197.09" y1="404.57" x2="1197.74" y2="406.98" stroke="#c6c6c6" stroke-width="0.900"/>
<line x1="1188.5" y1="404.8" x2="1188.5" y2="409.2" stroke="#c6c6c6" stroke-width="1"/>
<line x1="1179.91" y1="404.57" x2="1179.26" y2="406.98" stroke="#c6c6c6" stroke-width="0.900"/>
<line x1="1171.9" y1="401.25" x2="1170.65" y2="403.42" stroke="#c6c6c6" stroke-width="0.900"/>
<line x1="1165.02" y1="395.98" x2="1163.26" y2="397.74" stroke="#c6c6c6" stroke-width="0.900"/>
<line x1="1159.75" y1="389.1" x2="1157.58" y2="390.35" stroke="#c6c6c6" stroke-width="0.900"/>
<line x1="1156.43" y1="381.09" x2="1154.02" y2="381.74" stroke="#c6c6c6" stroke-width="0.900"/>
<line x1="1156.2" y1="372.5" x2="1151.8" y2="372.5" stroke="#c6c6c6" stroke-width="1"/>
<line x1="1156.43" y1="363.91" x2="1154.02" y2="363.26" stroke="#c6c6c6" stroke-width="0.900"/>
<line x1="1159.75" y1="355.9" x2="1157.58" y2="354.65" stroke="#c6c6c6" stroke-width="0.900"/>
<line x1="1165.02" y1="349.02" x2="1163.26" y2="347.26" stroke="#c6c6c6" stroke-width="0.900"/>
<line x1="1171.9" y1="343.75" x2="1170.65" y2="341.58" stroke="#c6c6c6" stroke-width="0.900"/>
<line x1="1179.91" y1="340.43" x2="1179.26" y2="338.02" stroke="#c6c6c6" stroke-width="0.900"/>
<circle cx="1188.5" cy="372.5" r="27.7" fill="none" stroke="#37474f" stroke-width="7"/>
<path d="M1188.5 344.8A27.7 27.7 0 0 1 1201.35 347.96" fill="none" stroke="#e21b1b" stroke-width="7" stroke-linecap="round"/>
<text x="1188.5" y="376.2" font-size="11" fill="#8f8f8f" font-weight="normal" text-anchor="middle">7.68%</text>
<line x1="254.5" y1="446.2" x2="254.5" y2="441.8" stroke="#c6c6c6" stroke-width="1"/>
<line x1="263.09" y1="446.43" x2="263.74" y2="444.02" stroke="#c6c6c6" stroke-width="0.900"/>
<line x1="271.1" y1="449.75" x2="272.35" y2="447.58" stroke="#c6c6c6" stroke-width="0.900"/>
<line x1="277.98" y1="455.02" x2="279.74" y2="453.26" stroke="#c6c6c6" stroke-width="0.900"/>
<line x1="283.25" y1="461.9" x2="285.42" y2="460.65" stroke="#c6c6c6" stroke-width="0.900"/>
<line x1="286.57" y1="469.91" x2="288.98" y2="469.26" stroke="#c6c6c6" stroke-width="0.900"/>
<line x1="286.8" y1="478.5" x2="291.2" y2="478.5" stroke="#c6c6c6" stroke-width="1"/>
<line x1="286.57" y1="487.09" x2="288.98" y2="487.74" stroke="#c6c6c6" stroke-width="0.900"/>
<line x1="283.25" y1="495.1" x2="285.42" y2="496.35" stroke="#c6c6c6" stroke-width="0.900"/>
<line x1="277.98" y1="501.98" x2="279.74" y2="503.74" stroke="#c6c6c6" stroke-width="0.900"/>
<line x1="271.1" y1="507.25" x2="272.35" y2="509.42" stroke="#c6c6c6" stroke-width="0.900"/>
<line x1="263.09" y1="510.57" x2="263.74" y2="512.98" stroke="#c6c6c6" stroke-width="0.900"/>
<line x1="254.5" y1="510.8" x2="254.5" y2="515.2" stroke="#c6c6c6" stroke-width="1"/>
<line x1="245.91" y1="510.57" x2="245.26" y2="512.98" stroke="#c6c6c6" stroke-width="0.900"/>
<line x1="237.9" y1="507.25" x2="236.65" y2="509.42" stroke="#c6c6c6" stroke-width="0.900"/>
<line x1="231.02" y1="501.98" x2="229.26" y2="503.74" stroke="#c6c6c6" stroke-width="0.900"/>
<line x1="225.75" y1="495.1" x2="223.58" y2="496.35" stroke="#c6c6c6" stroke-width="0.900"/>
<line x1="222.43" y1="487.09" x2="220.02" y2="487.74" stroke="#c6c6c6" stroke-width="0.900"/>
<line x1="222.2" y1="478.5" x2="217.8" y2="478.5" stroke="#c6c6c6" stroke-width="1"/>
<line x1="222.43" y1="469.91" x2="220.02" y2="469.26" stroke="#c6c6c6" stroke-width="0.900"/>
<line x1="225.75" y1="461.9" x2="223.58" y2="460.65" stroke="#c6c6c6" stroke-width="0.900"/>
<line x1="231.02" y1="455.02" x2="229.26" y2="453.26" stroke="#c6c6c6" stroke-width="0.900"/>
<line x1="237.9" y1="449.75" x2="236.65" y2="447.58" stroke="#c6c6c6" stroke-width="0.900"/>
<line x1="245.91" y1="446.43" x2="245.26" y2="444.02" stroke="#c6c6c6" stroke-width="0.900"/>
<circle cx="254.5" cy="478.5" r="27.7" fill="none" stroke="#37474f" stroke-width="7"/>
<path d="M254.5 450.8A27.7 27.7 0 0 1 271.6 456.71" fill="none" stroke="#e21b1b" stroke-width="7" stroke-linecap="round"/>
<text x="254.5" y="482.2" font-size="11" fill="#8f8f8f" font-weight="normal" text-anchor="middle">10.59%</text>
<line x1="487.5" y1="446.2" x2="487.5" y2="441.8" stroke="#c6c6c6" stroke-width="1"/>
<line x1="496.09" y1="446.43" x2="496.74" y2="444.02" stroke="#c6c6c6" stroke-width="0.900"/>
<line x1="504.1" y1="449.75" x2="505.35" y2="447.58" stroke="#c6c6c6" stroke-width="0.900"/>
<line x1="510.98" y1="455.02" x2="512.74" y2="453.26" stroke="#c6c6c6" stroke-width="0.900"/>
<line x1="516.25" y1="461.9" x2="518.42" y2="460.65" stroke="#c6c6c6" stroke-width="0.900"/>
<line x1="519.57" y1="469.91" x2="521.98" y2="469.26" stroke="#c6c6c6" stroke-width="0.900"/>
<line x1="519.8" y1="478.5" x2="524.2" y2="478.5" stroke="#c6c6c6" stroke-width="1"/>
<line x1="519.57" y1="487.09" x2="521.98" y2="487.74" stroke="#c6c6c6" stroke-width="0.900"/>
<line x1="516.25" y1="495.1" x2="518.42" y2="496.35" stroke="#c6c6c6" stroke-width="0.900"/>
<line x1="510.98" y1="501.98" x2="512.74" y2="503.74" stroke="#c6c6c6" stroke-width="0.900"/>
<line x1="504.1" y1="507.25" x2="505.35" y2="509.42" stroke="#c6c6c6" stroke-width="0.900"/>
<line x1="496.09" y1="510.57" x2="496.74" y2="512.98" stroke="#c6c6c6" stroke-width="0.900"/>
<line x1="487.5" y1="510.8" x2="487.5" y2="515.2" stroke="#c6c6c6" stroke-width="1"/>
<line x1="478.91" y1="510.57" x2="478.26" y2="512.98" stroke="#c6c6c6" stroke-width="0.900"/>
<line x1="470.9" y1="507.25" x2="469.65" y2="509.42" stroke="#c6c6c6" stroke-width="0.900"/>
<line x1="464.02" y1="501.98" x2="462.26" y2="503.74" stroke="#c6c6c6" stroke-width="0.900"/>
<line x1="458.75" y1="495.1" x2="456.58" y2="496.35" stroke="#c6c6c6" stroke-width="0.900"/>
<line x1="455.43" y1="487.09" x2="453.02" y2="487.74" stroke="#c6c6c6" stroke-width="0.900"/>
<line x1="455.2" y1="478.5" x2="450.8" y2="478.5" stroke="#c6c6c6" stroke-width="1"/>
<line x1="455.43" y1="469.91" x2="453.02" y2="469.26" stroke="#c6c6c6" stroke-width="0.900"/>
<line x1="458.75" y1="461.9" x2="456.58" y2="460.65" stroke="#c6c6c6" stroke-width="0.900"/>
<line x1="464.02" y1="455.02" x2="462.26" y2="453.26" stroke="#c6c6c6" stroke-width="0.900"/>
<line x1="470.9" y1="449.75" x2="469.65" y2="447.58" stroke="#c6c6c6" stroke-width="0.900"/>
<line x1="478.91" y1="446.43" x2="478.26" y2="444.02" stroke="#c6c6c6" stroke-width="0.900"/>
<circle cx="487.5" cy="478.5" r="27.7" fill="none" stroke="#37474f" stroke-width="7"/>
<path d="M487.5 450.8A27.7 27.7 0 1 1 470.4 456.71" fill="none" stroke="#21870a" stroke-width="7" stroke-linecap="round"/>
<text x="487.5" y="482.2" font-size="11" fill="#8f8f8f" font-weight="normal" text-anchor="middle">89.41%</text>
<line x1="721.5" y1="446.2" x2="721.5" y2="441.8" stroke="#c6c6c6" stroke-width="1"/>
<line x1="730.09" y1="446.43" x2="730.74" y2="444.02" stroke="#c6c6c6" stroke-width="0.900"/>
<line x1="738.1" y1="449.75" x2="739.35" y2="447.58" stroke="#c6c6c6" stroke-width="0.900"/>
<line x1="744.98" y1="455.02" x2="746.74" y2="453.26" stroke="#c6c6c6" stroke-width="0.900"/>
<line x1="750.25" y1="461.9" x2="752.42" y2="460.65" stroke="#c6c6c6" stroke-width="0.900"/>
<line x1="753.57" y1="469.91" x2="755.98" y2="469.26" stroke="#c6c6c6" stroke-width="0.900"/>
<line x1="753.8" y1="478.5" x2="758.2" y2="478.5" stroke="#c6c6c6" stroke-width="1"/>
<line x1="753.57" y1="487.09" x2="755.98" y2="487.74" stroke="#c6c6c6" stroke-width="0.900"/>
<line x1="750.25" y1="495.1" x2="752.42" y2="496.35" stroke="#c6c6c6" stroke-width="0.900"/>
<line x1="744.98" y1="501.98" x2="746.74" y2="503.74" stroke="#c6c6c6" stroke-width="0.900"/>
<line x1="738.1" y1="507.25" x2="739.35" y2="509.42" stroke="#c6c6c6" stroke-width="0.900"/>
<line x1="730.09" y1="510.57" x2="730.74" y2="512.98" stroke="#c6c6c6" stroke-width="0.900"/>
<line x1="721.5" y1="510.8" x2="721.5" y2="515.2" stroke="#c6c6c6" stroke-width="1"/>
<line x1="712.91" y1="510.57" x2="712.26" y2="512.98" stroke="#c6c6c6" stroke-width="0.900"/>
<line x1="704.9" y1="507.25" x2="703.65" y2="509.42" stroke="#c6c6c6" stroke-width="0.900"/>
<line x1="698.02" y1="501.98" x2="696.26" y2="503.74" stroke="#c6c6c6" stroke-width="0.900"/>
<line x1="692.75" y1="495.1" x2="690.58" y2="496.35" stroke="#c6c6c6" stroke-width="0.900"/>
<line x1="689.43" y1="487.09" x2="687.02" y2="487.74" stroke="#c6c6c6" stroke-width="0.900"/>
<line x1="689.2" y1="478.5" x2="684.8" y2="478.5" stroke="#c6c6c6" stroke-width="1"/>
<line x1="689.43" y1="469.91" x2="687.02" y2="469.26" stroke="#c6c6c6" stroke-width="0.900"/>
<line x1="692.75" y1="461.9" x2="690.58" y2="460.65" stroke="#c6c6c6" stroke-width="0.900"/>
<line x1="698.02" y1="455.02" x2="696.26" y2="453.26" stroke="#c6c6c6" stroke-width="0.900"/>
<line x1="704.9" y1="449.75" x2="703.65" y2="447.58" stroke="#c6c6c6" stroke-width="0.900"/>
<line x1="712.91" y1="446.43" x2="712.26" y2="444.02" stroke="#c6c6c6" stroke-width="0.900"/>
<circle cx="721.5" cy="478.5" r="27.7" fill="none" stroke="#37474f" stroke-width="7"/>
<circle cx="721.5" cy="450.8" r="3.500" fill="#e21b1b"/>
<text x="721.5" y="482.2" font-size="11" fill="#8f8f8f" font-weight="normal" text-anchor="middle">0.00%</text>
<line x1="955.5" y1="446.2" x2="955.5" y2="441.8" stroke="#c6c6c6" stroke-width="1"/>
<line x1="964.09" y1="446.43" x2="964.74" y2="444.02" stroke="#c6c6c6" stroke-width="0.900"/>
<line x1="972.1" y1="449.75" x2="973.35" y2="447.58" stroke="#c6c6c6" stroke-width="0.900"/>
<line x1="978.98" y1="455.02" x2="980.74" y2="453.26" stroke="#c6c6c6" stroke-width="0.900"/>
<line x1="984.25" y1="461.9" x2="986.42" y2="460.65" stroke="#c6c6c6" stroke-width="0.900"/>
<line x1="987.57" y1="469.91" x2="989.98" y2="469.26" stroke="#c6c6c6" stroke-width="0.900"/>
<line x1="987.8" y1="478.5" x2="992.2" y2="478.5" stroke="#c6c6c6" stroke-width="1"/>
<line x1="987.57" y1="487.09" x2="989.98" y2="487.74" stroke="#c6c6c6" stroke-width="0.900"/>
<line x1="984.25" y1="495.1" x2="986.42" y2="496.35" stroke="#c6c6c6" stroke-width="0.900"/>
<line x1="978.98" y1="501.98" x2="980.74" y2="503.74" stroke="#c6c6c6" stroke-width="0.900"/>
<line x1="972.1" y1="507.25" x2="973.35" y2="509.42" stroke="#c6c6c6" stroke-width="0.900"/>
<line x1="964.09" y1="510.57" x2="964.74" y2="512.98" stroke="#c6c6c6" stroke-width="0.900"/>
<line x1="955.5" y1="510.8" x2="955.5" y2="515.2" stroke="#c6c6c6" stroke-width="1"/>
<line x1="946.91" y1="510.57" x2="946.26" y2="512.98" stroke="#c6c6c6" stroke-width="0.900"/>
<line x1="938.9" y1="507.25" x2="937.65" y2="509.42" stroke="#c6c6c6" stroke-width="0.900"/>
<line x1="932.02" y1="501.98" x2="930.26" y2="503.74" stroke="#c6c6c6" stroke-width="0.900"/>
<line x1="926.75" y1="495.1" x2="924.58" y2="496.35" stroke="#c6c6c6" stroke-width="0.900"/>
<line x1="923.43" y1="487.09" x2="921.02" y2="487.74" stroke="#c6c6c6" stroke-width="0.900"/>
<line x1="923.2" y1="478.5" x2="918.8" y2="478.5" stroke="#c6c6c6" stroke-width="1"/>
<line x1="923.43" y1="469.91" x2="921.02" y2="469.26" stroke="#c6c6c6" stroke-width="0.900"/>
<line x1="926.75" y1="461.9" x2="924.58" y2="460.65" stroke="#c6c6c6" stroke-width="0.900"/>
<line x1="932.02" y1="455.02" x2="930.26" y2="453.26" stroke="#c6c6c6" stroke-width="0.900"/>
<line x1="938.9" y1="449.75" x2="937.65" y2="447.58" stroke="#c6c6c6" stroke-width="0.900"/>
<line x1="946.91" y1="446.43" x2="946.26" y2="444.02" stroke="#c6c6c6" stroke-width="0.900"/>
<circle cx="955.5" cy="478.5" r="27.7" fill="none" stroke="#37474f" stroke-width="7"/>
<path d="M955.5 450.8A27.7 27.7 0 0 1 967.37 453.47" fill="none" stroke="#e21b1b" stroke-width="7" stroke-linecap="round"/>
<text x="955.5" y="482.2" font-size="11" fill="#8f8f8f" font-weight="normal" text-anchor="middle">7.05%</text>
<line x1="1188.5" y1="446.2" x2="1188.5" y2="441.8" stroke="#c6c6c6" stroke-width="1"/>
<line x1="1197.09" y1="446.43" x2="1197.74" y2="444.02" stroke="#c6c6c6" stroke-width="0.900"/>
<line x1="1205.1" y1="449.75" x2="1206.35" y2="447.58" stroke="#c6c6c6" stroke-width="0.900"/>
<line x1="1211.98" y1="455.02" x2="1213.74" y2="453.26" stroke="#c6c6c6" stroke-width="0.900"/>
<line x1="1217.25" y1="461.9" x2="1219.42" y2="460.65" stroke="#c6c6c6" stroke-width="0.900"/>
<line x1="1220.57" y1="469.91" x2="1222.98" y2="469.26" stroke="#c6c6c6" stroke-width="0.900"/>
<line x1="1220.8" y1="478.5" x2="1225.2" y2="478.5" stroke="#c6c6c6" stroke-width="1"/>
<line x1="1220.57" y1="487.09" x2="1222.98" y2="487.74" stroke="#c6c6c6" stroke-width="0.900"/>
<line x1="1217.25" y1="495.1" x2="1219.42" y2="496.35" stroke="#c6c6c6" stroke-width="0.900"/>
<line x1="1211.98" y1="501.98" x2="1213.74" y2="503.74" stroke="#c6c6c6" stroke-width="0.900"/>
<line x1="1205.1" y1="507.25" x2="1206.35" y2="509.42" stroke="#c6c6c6" stroke-width="0.900"/>
<line x1="1197.09" y1="510.57" x2="1197.74" y2="512.98" stroke="#c6c6c6" stroke-width="0.900"/>
<line x1="1188.5" y1="510.8" x2="1188.5" y2="515.2" stroke="#c6c6c6" stroke-width="1"/>
<line x1="1179.91" y1="510.57" x2="1179.26" y2="512.98" stroke="#c6c6c6" stroke-width="0.900"/>
<line x1="1171.9" y1="507.25" x2="1170.65" y2="509.42" stroke="#c6c6c6" stroke-width="0.900"/>
<line x1="1165.02" y1="501.98" x2="1163.26" y2="503.74" stroke="#c6c6c6" stroke-width="0.900"/>
<line x1="1159.75" y1="495.1" x2="1157.58" y2="496.35" stroke="#c6c6c6" stroke-width="0.900"/>
<line x1="1156.43" y1="487.09" x2="1154.02" y2="487.74" stroke="#c6c6c6" stroke-width="0.900"/>
<line x1="1156.2" y1="478.5" x2="1151.8" y2="478.5" stroke="#c6c6c6" stroke-width="1"/>
<line x1="1156.43" y1="469.91" x2="1154.02" y2="469.26" stroke="#c6c6c6" stroke-width="0.900"/>
<line x1="1159.75" y1="461.9" x2="1157.58" y2="460.65" stroke="#c6c6c6" stroke-width="0.900"/>
<line x1="1165.02" y1="455.02" x2="1163.26" y2="453.26" stroke="#c6c6c6" stroke-width="0.900"/>
<line x1="1171.9" y1="449.75" x2="1170.65" y2="447.58" stroke="#c6c6c6" stroke-width="0.900"/>
<line x1="1179.91" y1="446.43" x2="1179.26" y2="444.02" stroke="#c6c6c6" stroke-width="0.900"/>
<circle cx="1188.5" cy="478.5" r="27.7" fill="none" stroke="#37474f" stroke-width="7"/>
<path d="M1188.5 450.8A27.7 27.7 0 0 1 1194.61 451.48" fill="none" stroke="#e21b1b" stroke-width="7" stroke-linecap="round"/>
<text x="1188.5" y="482.2" font-size="11" fill="#8f8f8f" font-weight="normal" text-anchor="middle">3.54%</text>
<rect x="263.7" y="354" width="3.500" height="5.1" rx="0.800" fill="#33383b"/>
<rect x="268.8" y="349.9" width="3.500" height="9.2" rx="0.800" fill="#33383b"/>
<rect x="273.9" y="345" width="3.500" height="14.1" rx="0.800" fill="#33383b"/>
<rect x="279.6" y="341.1" width="3.500" height="18" rx="0.800" fill="#33383b"/>
<rect x="284.9" y="337" width="3.500" height="22.1" rx="0.800" fill="#33383b"/>
<path fill="#33383b" d="M735 342.800h16.400v-2.800l5.600 4-5.600 4.200v-3h-16.400z M757 350.800h-16.400v-2.800l-5.600 4.200 5.600 4v-2.600h16.400z"/>
<path fill="#33383b" d="M983 337h5.900l-0.500 13.700h-4.700z"/><circle cx="986.100" cy="355.700" r="3.100" fill="#33383b"/>
<path transform="translate(1436 334.8) scale(1.1)" fill="#33383b" d="M18 2h-8L4.02 8 4 20c0 1.1.9 2 2 2h12c1.1 0 2-.9 2-2V4c0-1.1-.9-2-2-2zm-6 6h-2V4h2v4zm3 0h-2V4h2v4zm3 0h-2V4h2v4z" />
<path fill="#33383b" fill-rule="evenodd" d="M1441 443h16v1.700h-0.700l-0.500 4.600l-3.700 4.500l3.700 4.500l0.500 4.100h0.700v1.700h-16v-1.700h0.700l0.500-4.100l3.700-4.500l-3.700-4.500l-0.500-4.600h-0.700zM1445.100 445.300h8.800v2.400h-8.800z M1446.100 456.300h6.800v2.600h-6.800z"/>
<clipPath id="tclip"><rect x="122" y="125" width="1331" height="177.6"/></clipPath>
<line x1="122" y1="229.5" x2="1453" y2="229.5" stroke="#505050" stroke-width="1"/>
<line x1="122" y1="192.5" x2="1453" y2="192.5" stroke="#505050" stroke-width="1"/>
<g clip-path="url(#tclip)"><rect x="114.4" y="233.19" width="15.2" height="70.11" fill="#526d46" stroke="#6f8f52" stroke-width="0.600"/><rect x="114.4" y="290.75" width="15.2" height="12.55" fill="#8db792"/><rect x="136.96" y="196.29" width="15.2" height="107.01" fill="#526d46" stroke="#6f8f52" stroke-width="0.600"/><rect x="136.96" y="290.75" width="15.2" height="12.55" fill="#8db792"/><rect x="159.52" y="240.57" width="15.2" height="62.73" fill="#526d46" stroke="#6f8f52" stroke-width="0.600"/><rect x="159.52" y="287.06" width="15.2" height="16.24" fill="#8db792"/><rect x="159.52" y="298.13" width="15.2" height="5.17" fill="#c1a062"/><rect x="182.08" y="199.98" width="15.2" height="103.32" fill="#526d46" stroke="#6f8f52" stroke-width="0.600"/><rect x="182.08" y="298.13" width="15.2" height="5.17" fill="#c1a062"/><rect x="204.64" y="192.6" width="15.2" height="110.7" fill="#526d46" stroke="#6f8f52" stroke-width="0.600"/><rect x="204.64" y="290.75" width="15.2" height="12.55" fill="#8db792"/><rect x="204.64" y="298.13" width="15.2" height="5.17" fill="#c1a062"/><rect x="227.2" y="199.98" width="15.2" height="103.32" fill="#526d46" stroke="#6f8f52" stroke-width="0.600"/><rect x="227.2" y="287.06" width="15.2" height="16.24" fill="#8db792"/><rect x="249.76" y="222.12" width="15.2" height="81.18" fill="#526d46" stroke="#6f8f52" stroke-width="0.600"/><rect x="249.76" y="294.44" width="15.2" height="8.86" fill="#8db792"/><rect x="249.76" y="298.13" width="15.2" height="5.17" fill="#c1a062"/><rect x="272.32" y="218.43" width="15.2" height="84.87" fill="#526d46" stroke="#6f8f52" stroke-width="0.600"/><rect x="272.32" y="294.44" width="15.2" height="8.86" fill="#c1a062"/><rect x="294.88" y="214.74" width="15.2" height="88.56" fill="#526d46" stroke="#6f8f52" stroke-width="0.600"/><rect x="294.88" y="287.06" width="15.2" height="16.24" fill="#8db792"/><rect x="294.88" y="298.13" width="15.2" height="5.17" fill="#c1a062"/><rect x="317.44" y="255.33" width="15.2" height="47.97" fill="#526d46" stroke="#6f8f52" stroke-width="0.600"/><rect x="340" y="192.6" width="15.2" height="110.7" fill="#526d46" stroke="#6f8f52" stroke-width="0.600"/><rect x="340" y="290.75" width="15.2" height="12.55" fill="#8db792"/><rect x="362.56" y="240.57" width="15.2" height="62.73" fill="#526d46" stroke="#6f8f52" stroke-width="0.600"/><rect x="362.56" y="294.44" width="15.2" height="8.86" fill="#8db792"/><rect x="362.56" y="298.13" width="15.2" height="5.17" fill="#c1a062"/><rect x="385.12" y="170.46" width="15.2" height="132.84" fill="#526d46" stroke="#6f8f52" stroke-width="0.600"/><rect x="385.12" y="287.06" width="15.2" height="16.24" fill="#8db792"/><rect x="385.12" y="298.13" width="15.2" height="5.17" fill="#c1a062"/><rect x="407.68" y="251.64" width="15.2" height="51.66" fill="#526d46" stroke="#6f8f52" stroke-width="0.600"/><rect x="407.68" y="287.06" width="15.2" height="16.24" fill="#8db792"/><rect x="430.24" y="185.22" width="15.2" height="118.08" fill="#526d46" stroke="#6f8f52" stroke-width="0.600"/><rect x="430.24" y="290.75" width="15.2" height="12.55" fill="#8db792"/><rect x="430.24" y="298.13" width="15.2" height="5.17" fill="#c1a062"/><rect x="452.8" y="199.98" width="15.2" height="103.32" fill="#526d46" stroke="#6f8f52" stroke-width="0.600"/><rect x="452.8" y="287.06" width="15.2" height="16.24" fill="#8db792"/><rect x="452.8" y="290.75" width="15.2" height="12.55" fill="#c1a062"/><rect x="475.36" y="214.74" width="15.2" height="88.56" fill="#526d46" stroke="#6f8f52" stroke-width="0.600"/><rect x="475.36" y="294.44" width="15.2" height="8.86" fill="#8db792"/><rect x="475.36" y="298.13" width="15.2" height="5.17" fill="#c1a062"/><rect x="497.92" y="211.05" width="15.2" height="92.25" fill="#526d46" stroke="#6f8f52" stroke-width="0.600"/><rect x="497.92" y="294.44" width="15.2" height="8.86" fill="#8db792"/><rect x="520.48" y="155.7" width="15.2" height="147.6" fill="#526d46" stroke="#6f8f52" stroke-width="0.600"/><rect x="520.48" y="283.37" width="15.2" height="19.93" fill="#8db792"/><rect x="543.04" y="188.91" width="15.2" height="114.39" fill="#526d46" stroke="#6f8f52" stroke-width="0.600"/><rect x="543.04" y="290.75" width="15.2" height="12.55" fill="#8db792"/><rect x="543.04" y="298.13" width="15.2" height="5.17" fill="#c1a062"/><rect x="565.6" y="233.19" width="15.2" height="70.11" fill="#526d46" stroke="#6f8f52" stroke-width="0.600"/><rect x="588.16" y="188.91" width="15.2" height="114.39" fill="#526d46" stroke="#6f8f52" stroke-width="0.600"/><rect x="588.16" y="294.44" width="15.2" height="8.86" fill="#8db792"/><rect x="610.72" y="262.71" width="15.2" height="40.59" fill="#526d46" stroke="#6f8f52" stroke-width="0.600"/><rect x="610.72" y="298.13" width="15.2" height="5.17" fill="#8db792"/><rect x="633.28" y="222.12" width="15.2" height="81.18" fill="#526d46" stroke="#6f8f52" stroke-width="0.600"/><rect x="633.28" y="298.13" width="15.2" height="5.17" fill="#c1a062"/><rect x="655.84" y="185.22" width="15.2" height="118.08" fill="#526d46" stroke="#6f8f52" stroke-width="0.600"/><rect x="655.84" y="294.44" width="15.2" height="8.86" fill="#8db792"/><rect x="678.4" y="244.26" width="15.2" height="59.04" fill="#526d46" stroke="#6f8f52" stroke-width="0.600"/><rect x="678.4" y="298.13" width="15.2" height="5.17" fill="#8db792"/><rect x="700.96" y="199.98" width="15.2" height="103.32" fill="#526d46" stroke="#6f8f52" stroke-width="0.600"/><rect x="700.96" y="290.75" width="15.2" height="12.55" fill="#8db792"/><rect x="700.96" y="298.13" width="15.2" height="5.17" fill="#c1a062"/><rect x="723.52" y="185.22" width="15.2" height="118.08" fill="#526d46" stroke="#6f8f52" stroke-width="0.600"/><rect x="723.52" y="290.75" width="15.2" height="12.55" fill="#8db792"/><rect x="723.52" y="294.44" width="15.2" height="8.86" fill="#c1a062"/><rect x="746.08" y="225.81" width="15.2" height="77.49" fill="#526d46" stroke="#6f8f52" stroke-width="0.600"/><rect x="746.08" y="290.75" width="15.2" height="12.55" fill="#8db792"/><rect x="768.64" y="145" width="15.2" height="158.3" fill="#526d46" stroke="#6f8f52" stroke-width="0.600"/><rect x="768.64" y="279.68" width="15.2" height="23.62" fill="#8db792"/><rect x="768.64" y="298.13" width="15.2" height="5.17" fill="#c1a062"/><rect x="791.2" y="188.91" width="15.2" height="114.39" fill="#526d46" stroke="#6f8f52" stroke-width="0.600"/><rect x="791.2" y="287.06" width="15.2" height="16.24" fill="#8db792"/><rect x="791.2" y="298.13" width="15.2" height="5.17" fill="#c1a062"/><rect x="813.76" y="247.95" width="15.2" height="55.35" fill="#526d46" stroke="#6f8f52" stroke-width="0.600"/><rect x="813.76" y="287.06" width="15.2" height="16.24" fill="#8db792"/><rect x="836.32" y="207.36" width="15.2" height="95.94" fill="#526d46" stroke="#6f8f52" stroke-width="0.600"/><rect x="836.32" y="294.44" width="15.2" height="8.86" fill="#c1a062"/><rect x="858.88" y="214.74" width="15.2" height="88.56" fill="#526d46" stroke="#6f8f52" stroke-width="0.600"/><rect x="858.88" y="283.37" width="15.2" height="19.93" fill="#8db792"/><rect x="881.44" y="207.36" width="15.2" height="95.94" fill="#526d46" stroke="#6f8f52" stroke-width="0.600"/><rect x="881.44" y="294.44" width="15.2" height="8.86" fill="#8db792"/><rect x="881.44" y="298.13" width="15.2" height="5.17" fill="#c1a062"/><rect x="904" y="255.33" width="15.2" height="47.97" fill="#526d46" stroke="#6f8f52" stroke-width="0.600"/><rect x="904" y="287.06" width="15.2" height="16.24" fill="#8db792"/><rect x="904" y="294.44" width="15.2" height="8.86" fill="#c1a062"/><rect x="926.56" y="192.6" width="15.2" height="110.7" fill="#526d46" stroke="#6f8f52" stroke-width="0.600"/><rect x="926.56" y="290.75" width="15.2" height="12.55" fill="#8db792"/><rect x="949.12" y="222.12" width="15.2" height="81.18" fill="#526d46" stroke="#6f8f52" stroke-width="0.600"/><rect x="949.12" y="298.13" width="15.2" height="5.17" fill="#8db792"/><rect x="971.68" y="214.74" width="15.2" height="88.56" fill="#526d46" stroke="#6f8f52" stroke-width="0.600"/><rect x="971.68" y="294.44" width="15.2" height="8.86" fill="#8db792"/><rect x="971.68" y="298.13" width="15.2" height="5.17" fill="#c1a062"/><rect x="994.24" y="233.19" width="15.2" height="70.11" fill="#526d46" stroke="#6f8f52" stroke-width="0.600"/><rect x="994.24" y="290.75" width="15.2" height="12.55" fill="#8db792"/><rect x="994.24" y="294.44" width="15.2" height="8.86" fill="#c1a062"/><rect x="1016.8" y="181.53" width="15.2" height="121.77" fill="#526d46" stroke="#6f8f52" stroke-width="0.600"/><rect x="1016.8" y="290.75" width="15.2" height="12.55" fill="#8db792"/><rect x="1039.36" y="222.12" width="15.2" height="81.18" fill="#526d46" stroke="#6f8f52" stroke-width="0.600"/><rect x="1039.36" y="294.44" width="15.2" height="8.86" fill="#8db792"/><rect x="1061.92" y="188.91" width="15.2" height="114.39" fill="#526d46" stroke="#6f8f52" stroke-width="0.600"/><rect x="1061.92" y="287.06" width="15.2" height="16.24" fill="#8db792"/><rect x="1061.92" y="294.44" width="15.2" height="8.86" fill="#c1a062"/><rect x="1084.48" y="244.26" width="15.2" height="59.04" fill="#526d46" stroke="#6f8f52" stroke-width="0.600"/><rect x="1084.48" y="294.44" width="15.2" height="8.86" fill="#8db792"/><rect x="1084.48" y="298.13" width="15.2" height="5.17" fill="#c1a062"/><rect x="1107.04" y="233.19" width="15.2" height="70.11" fill="#526d46" stroke="#6f8f52" stroke-width="0.600"/><rect x="1107.04" y="298.13" width="15.2" height="5.17" fill="#8db792"/><rect x="1129.6" y="222.12" width="15.2" height="81.18" fill="#526d46" stroke="#6f8f52" stroke-width="0.600"/><rect x="1129.6" y="298.13" width="15.2" height="5.17" fill="#c1a062"/><rect x="1152.16" y="174.15" width="15.2" height="129.15" fill="#526d46" stroke="#6f8f52" stroke-width="0.600"/><rect x="1152.16" y="261.23" width="15.2" height="42.07" fill="#8db792"/><rect x="1152.16" y="290.75" width="15.2" height="12.55" fill="#c1a062"/><rect x="1174.72" y="218.43" width="15.2" height="84.87" fill="#526d46" stroke="#6f8f52" stroke-width="0.600"/><rect x="1174.72" y="287.06" width="15.2" height="16.24" fill="#8db792"/><rect x="1174.72" y="290.75" width="15.2" height="12.55" fill="#c1a062"/><rect x="1197.28" y="192.6" width="15.2" height="110.7" fill="#526d46" stroke="#6f8f52" stroke-width="0.600"/><rect x="1197.28" y="294.44" width="15.2" height="8.86" fill="#8db792"/><rect x="1197.28" y="298.13" width="15.2" height="5.17" fill="#c1a062"/><rect x="1219.84" y="170.46" width="15.2" height="132.84" fill="#526d46" stroke="#6f8f52" stroke-width="0.600"/><rect x="1219.84" y="294.44" width="15.2" height="8.86" fill="#8db792"/><rect x="1242.4" y="218.43" width="15.2" height="84.87" fill="#526d46" stroke="#6f8f52" stroke-width="0.600"/><rect x="1242.4" y="294.44" width="15.2" height="8.86" fill="#8db792"/><rect x="1264.96" y="240.57" width="15.2" height="62.73" fill="#526d46" stroke="#6f8f52" stroke-width="0.600"/><rect x="1264.96" y="294.44" width="15.2" height="8.86" fill="#8db792"/><rect x="1287.52" y="199.98" width="15.2" height="103.32" fill="#526d46" stroke="#6f8f52" stroke-width="0.600"/><rect x="1287.52" y="283.37" width="15.2" height="19.93" fill="#8db792"/><rect x="1287.52" y="294.44" width="15.2" height="8.86" fill="#c1a062"/><rect x="1310.08" y="240.57" width="15.2" height="62.73" fill="#526d46" stroke="#6f8f52" stroke-width="0.600"/><rect x="1310.08" y="298.13" width="15.2" height="5.17" fill="#8db792"/><rect x="1332.64" y="192.6" width="15.2" height="110.7" fill="#526d46" stroke="#6f8f52" stroke-width="0.600"/><rect x="1332.64" y="290.75" width="15.2" height="12.55" fill="#8db792"/><rect x="1332.64" y="294.44" width="15.2" height="8.86" fill="#c1a062"/><rect x="1355.2" y="247.95" width="15.2" height="55.35" fill="#526d46" stroke="#6f8f52" stroke-width="0.600"/><rect x="1355.2" y="290.75" width="15.2" height="12.55" fill="#8db792"/><rect x="1355.2" y="298.13" width="15.2" height="5.17" fill="#c1a062"/><rect x="1377.76" y="188.91" width="15.2" height="114.39" fill="#526d46" stroke="#6f8f52" stroke-width="0.600"/><rect x="1377.76" y="290.75" width="15.2" height="12.55" fill="#8db792"/><rect x="1377.76" y="298.13" width="15.2" height="5.17" fill="#c1a062"/><rect x="1400.32" y="233.19" width="15.2" height="70.11" fill="#526d46" stroke="#6f8f52" stroke-width="0.600"/><rect x="1400.32" y="294.44" width="15.2" height="8.86" fill="#8db792"/><rect x="1422.88" y="177.84" width="15.2" height="125.46" fill="#526d46" stroke="#6f8f52" stroke-width="0.600"/><rect x="1422.88" y="290.75" width="15.2" height="12.55" fill="#8db792"/><rect x="1422.88" y="298.13" width="15.2" height="5.17" fill="#c1a062"/><rect x="1445.44" y="196.29" width="15.2" height="107.01" fill="#526d46" stroke="#6f8f52" stroke-width="0.600"/><rect x="1445.44" y="294.44" width="15.2" height="8.86" fill="#8db792"/></g>
<line x1="121.5" y1="130" x2="121.5" y2="303.1" stroke="#161616" stroke-width="1"/>
<line x1="121.5" y1="303" x2="1453" y2="303" stroke="#181818" stroke-width="1"/>
<text x="119.3" y="160.1" font-size="10.1" fill="#c4c4c4" font-weight="normal" text-anchor="end" textLength="11.34" lengthAdjust="spacingAndGlyphs">40</text>
<text x="119.3" y="196.9" font-size="10.1" fill="#c4c4c4" font-weight="normal" text-anchor="end" textLength="11.34" lengthAdjust="spacingAndGlyphs">30</text>
<text x="119.3" y="233.5" font-size="10.1" fill="#c4c4c4" font-weight="normal" text-anchor="end" textLength="11.34" lengthAdjust="spacingAndGlyphs">20</text>
<text x="119.3" y="269.8" font-size="10.1" fill="#c4c4c4" font-weight="normal" text-anchor="end" textLength="11.34" lengthAdjust="spacingAndGlyphs">10</text>
<text x="119.3" y="300" font-size="10.1" fill="#c4c4c4" font-weight="normal" text-anchor="end" textLength="5.67" lengthAdjust="spacingAndGlyphs">0</text>
<text x="189.68" y="314.6" font-size="10.1" fill="#c4c4c4" font-weight="normal" text-anchor="middle" textLength="38.92" lengthAdjust="spacingAndGlyphs">21:55:05</text>
<text x="302.48" y="314.6" font-size="10.1" fill="#c4c4c4" font-weight="normal" text-anchor="middle" textLength="38.92" lengthAdjust="spacingAndGlyphs">21:55:10</text>
<text x="415.28" y="314.6" font-size="10.1" fill="#c4c4c4" font-weight="normal" text-anchor="middle" textLength="38.92" lengthAdjust="spacingAndGlyphs">21:55:15</text>
<text x="528.08" y="314.6" font-size="10.1" fill="#c4c4c4" font-weight="normal" text-anchor="middle" textLength="38.92" lengthAdjust="spacingAndGlyphs">21:55:20</text>
<text x="640.88" y="314.6" font-size="10.1" fill="#c4c4c4" font-weight="normal" text-anchor="middle" textLength="38.92" lengthAdjust="spacingAndGlyphs">21:55:25</text>
<text x="753.68" y="314.6" font-size="10.1" fill="#c4c4c4" font-weight="normal" text-anchor="middle" textLength="38.92" lengthAdjust="spacingAndGlyphs">21:55:30</text>
<text x="866.48" y="314.6" font-size="10.1" fill="#c4c4c4" font-weight="normal" text-anchor="middle" textLength="38.92" lengthAdjust="spacingAndGlyphs">21:55:35</text>
<text x="979.28" y="314.6" font-size="10.1" fill="#c4c4c4" font-weight="normal" text-anchor="middle" textLength="38.92" lengthAdjust="spacingAndGlyphs">21:55:40</text>
<text x="1092.08" y="314.6" font-size="10.1" fill="#c4c4c4" font-weight="normal" text-anchor="middle" textLength="38.92" lengthAdjust="spacingAndGlyphs">21:55:45</text>
<text x="1204.88" y="314.6" font-size="10.1" fill="#c4c4c4" font-weight="normal" text-anchor="middle" textLength="38.92" lengthAdjust="spacingAndGlyphs">21:55:50</text>
<text x="1317.68" y="314.6" font-size="10.1" fill="#c4c4c4" font-weight="normal" text-anchor="middle" textLength="38.92" lengthAdjust="spacingAndGlyphs">21:55:55</text>
<text x="1430.48" y="314.6" font-size="10.1" fill="#c4c4c4" font-weight="normal" text-anchor="middle" textLength="25.13" lengthAdjust="spacingAndGlyphs">21:56</text>
<text transform="translate(88.8 224.7) rotate(-90)" font-size="13.400" fill="#747474" text-anchor="middle" textLength="55.66" lengthAdjust="spacingAndGlyphs">Requests</text>
<text x="763.8" y="120.6" font-size="13.75" fill="#8c8c8c" font-weight="bold" text-anchor="middle" textLength="40.71" lengthAdjust="spacingAndGlyphs">Traffic</text>
<rect x="1290.400" y="130.200" width="161.300" height="32.400" rx="1.500" fill="#36424a"/>
<line x1="1290.400" y1="155.500" x2="1451.700" y2="155.500" stroke="#3d4b52" stroke-width="1"/>
<line x1="1294.3" y1="140.5" x2="1304.1" y2="140.5" stroke="#7cb342" stroke-width="1.400"/>
<text x="1306.8" y="144.2" font-size="10.15" fill="#e6e6e6" font-weight="normal" text-anchor="start" textLength="38.08" lengthAdjust="spacingAndGlyphs">Success</text>
<line x1="1348.2" y1="140.5" x2="1358" y2="140.5" stroke="#e6b01a" stroke-width="1.400"/>
<text x="1360.7" y="144.2" font-size="10.15" fill="#e6e6e6" font-weight="normal" text-anchor="start" textLength="37.26" lengthAdjust="spacingAndGlyphs">Redirect</text>
<line x1="1401" y1="140.5" x2="1410.8" y2="140.5" stroke="#69c6e6" stroke-width="1.400"/>
<text x="1413.3" y="144.2" font-size="10.15" fill="#e6e6e6" font-weight="normal" text-anchor="start" textLength="25.84" lengthAdjust="spacingAndGlyphs">Client</text>
<text x="1294.3" y="155.9" font-size="10.15" fill="#e6e6e6" font-weight="normal" text-anchor="start" textLength="21.84" lengthAdjust="spacingAndGlyphs">Error</text>
<line x1="1318.8" y1="152.3" x2="1328.6" y2="152.3" stroke="#e07b2a" stroke-width="1.400"/>
<text x="1331.6" y="155.9" font-size="10.15" fill="#e6e6e6" font-weight="normal" text-anchor="start" textLength="52.91" lengthAdjust="spacingAndGlyphs">Server Error</text>
<clipPath id="c1"><rect x="122.8" y="570" width="629.18" height="112.7"/></clipPath>
<line x1="122.3" y1="648.5" x2="751.48" y2="648.5" stroke="#4c4c4c" stroke-width="1"/>
<line x1="122.3" y1="613.5" x2="751.48" y2="613.5" stroke="#4c4c4c" stroke-width="1"/>
<line x1="122.3" y1="579.5" x2="751.48" y2="579.5" stroke="#4c4c4c" stroke-width="1"/>
<path d="M122.3 682.7L122.3 640.65L132.96 650.99L143.63 672.36L154.29 640.65L164.96 640.65L175.62 637.9L186.28 662.71L196.95 635.83L207.61 673.05L218.28 659.26L228.94 663.4L239.6 650.3L250.27 661.33L260.93 672.36L271.6 641.34L282.26 617.91L292.92 662.02L303.59 647.89L314.25 623.42L324.92 651.68L335.58 650.3L346.24 650.3L356.91 671.26L367.57 661.54L378.24 662.3L388.9 650.3L399.56 640.65L410.23 639.48L420.89 670.98L431.56 579.31L442.22 617.91L452.88 682.42L463.55 661.54L474.21 660.37L484.88 651.82L495.54 650.3L506.2 672.36L516.87 628.93L527.53 662.02L538.2 669.95L548.86 636.1L559.52 658.92L570.19 644.1L580.85 672.36L591.52 640.65L602.18 646.37L612.84 600.67L623.51 652.37L634.17 644.79L644.84 661.54L655.5 628.93L666.16 650.3L676.83 661.33L687.49 671.67L698.16 640.65L708.82 586.2L719.48 650.99L730.15 671.67L740.81 630.52L751.48 629.21L751.48 682.7Z" fill="rgba(65,89,57,0.5)" clip-path="url(#c1)"/>
<clipPath id="a1"><path d="M122.3 682.7L122.3 640.65L132.96 650.99L143.63 672.36L154.29 640.65L164.96 640.65L175.62 637.9L186.28 662.71L196.95 635.83L207.61 673.05L218.28 659.26L228.94 663.4L239.6 650.3L250.27 661.33L260.93 672.36L271.6 641.34L282.26 617.91L292.92 662.02L303.59 647.89L314.25 623.42L324.92 651.68L335.58 650.3L346.24 650.3L356.91 671.26L367.57 661.54L378.24 662.3L388.9 650.3L399.56 640.65L410.23 639.48L420.89 670.98L431.56 579.31L442.22 617.91L452.88 682.42L463.55 661.54L474.21 660.37L484.88 651.82L495.54 650.3L506.2 672.36L516.87 628.93L527.53 662.02L538.2 669.95L548.86 636.1L559.52 658.92L570.19 644.1L580.85 672.36L591.52 640.65L602.18 646.37L612.84 600.67L623.51 652.37L634.17 644.79L644.84 661.54L655.5 628.93L666.16 650.3L676.83 661.33L687.49 671.67L698.16 640.65L708.82 586.2L719.48 650.99L730.15 671.67L740.81 630.52L751.48 629.21L751.48 682.7Z"/></clipPath>
<line x1="122.3" y1="648.5" x2="751.48" y2="648.5" stroke="#827828" stroke-width="1" opacity="0.380" clip-path="url(#a1)"/>
<line x1="122.3" y1="613.5" x2="751.48" y2="613.5" stroke="#827828" stroke-width="1" opacity="0.380" clip-path="url(#a1)"/>
<line x1="122.3" y1="579.5" x2="751.48" y2="579.5" stroke="#827828" stroke-width="1" opacity="0.380" clip-path="url(#a1)"/>
<line x1="207.5" y1="570" x2="207.5" y2="682.7" stroke="#ffffff" stroke-width="1" opacity="0.2"/>
<line x1="314.5" y1="570" x2="314.5" y2="682.7" stroke="#ffffff" stroke-width="1" opacity="0.2"/>
<line x1="420.5" y1="570" x2="420.5" y2="682.7" stroke="#ffffff" stroke-width="1" opacity="0.2"/>
<line x1="527.5" y1="570" x2="527.5" y2="682.7" stroke="#ffffff" stroke-width="1" opacity="0.2"/>
<line x1="634.5" y1="570" x2="634.5" y2="682.7" stroke="#ffffff" stroke-width="1" opacity="0.2"/>
<line x1="740.5" y1="570" x2="740.5" y2="682.7" stroke="#ffffff" stroke-width="1" opacity="0.07"/>
<path d="M122.3 640.65L132.96 650.99L143.63 672.36L154.29 640.65L164.96 640.65L175.62 637.9L186.28 662.71L196.95 635.83L207.61 673.05L218.28 659.26L228.94 663.4L239.6 650.3L250.27 661.33L260.93 672.36L271.6 641.34L282.26 617.91L292.92 662.02L303.59 647.89L314.25 623.42L324.92 651.68L335.58 650.3L346.24 650.3L356.91 671.26L367.57 661.54L378.24 662.3L388.9 650.3L399.56 640.65L410.23 639.48L420.89 670.98L431.56 579.31L442.22 617.91L452.88 682.42L463.55 661.54L474.21 660.37L484.88 651.82L495.54 650.3L506.2 672.36L516.87 628.93L527.53 662.02L538.2 669.95L548.86 636.1L559.52 658.92L570.19 644.1L580.85 672.36L591.52 640.65L602.18 646.37L612.84 600.67L623.51 652.37L634.17 644.79L644.84 661.54L655.5 628.93L666.16 650.3L676.83 661.33L687.49 671.67L698.16 640.65L708.82 586.2L719.48 650.99L730.15 671.67L740.81 630.52L751.48 629.21" fill="none" stroke="#78ad58" stroke-width="1" stroke-linejoin="round" clip-path="url(#c1)"/>
<line x1="122.3" y1="570" x2="122.3" y2="682.7" stroke="#171717" stroke-width="1"/>
<text x="119.5" y="680.9" font-size="10.1" fill="#c4c4c4" font-weight="normal" text-anchor="end" textLength="5.67" lengthAdjust="spacingAndGlyphs">0</text>
<text x="119.5" y="653.1" font-size="10.1" fill="#c4c4c4" font-weight="normal" text-anchor="end" textLength="5.67" lengthAdjust="spacingAndGlyphs">5</text>
<text x="119.5" y="618.6" font-size="10.1" fill="#c4c4c4" font-weight="normal" text-anchor="end" textLength="11.34" lengthAdjust="spacingAndGlyphs">10</text>
<text x="119.5" y="584.1" font-size="10.1" fill="#c4c4c4" font-weight="normal" text-anchor="end" textLength="11.34" lengthAdjust="spacingAndGlyphs">15</text>
<text x="207.61" y="695.6" font-size="10.1" fill="#c4c4c4" font-weight="normal" text-anchor="middle" textLength="38.92" lengthAdjust="spacingAndGlyphs">21:55:10</text>
<text x="314.25" y="695.6" font-size="10.1" fill="#c4c4c4" font-weight="normal" text-anchor="middle" textLength="38.92" lengthAdjust="spacingAndGlyphs">21:55:20</text>
<text x="420.89" y="695.6" font-size="10.1" fill="#c4c4c4" font-weight="normal" text-anchor="middle" textLength="38.92" lengthAdjust="spacingAndGlyphs">21:55:30</text>
<text x="527.53" y="695.6" font-size="10.1" fill="#c4c4c4" font-weight="normal" text-anchor="middle" textLength="38.92" lengthAdjust="spacingAndGlyphs">21:55:40</text>
<text x="634.17" y="695.6" font-size="10.1" fill="#c4c4c4" font-weight="normal" text-anchor="middle" textLength="38.92" lengthAdjust="spacingAndGlyphs">21:55:50</text>
<text x="742.51" y="695.6" font-size="10.1" fill="#c4c4c4" font-weight="normal" text-anchor="middle" textLength="25.13" lengthAdjust="spacingAndGlyphs">21:56</text>
<text transform="translate(88.7 635.3) rotate(-90)" font-size="13.400" fill="#747474" text-anchor="middle" textLength="41.62" lengthAdjust="spacingAndGlyphs">CPU, %</text>
<text x="413.2" y="561" font-size="13.75" fill="#8c8c8c" font-weight="bold" text-anchor="middle" textLength="26.73" lengthAdjust="spacingAndGlyphs">CPU</text>
<clipPath id="c2"><rect x="823.7" y="570" width="628.94" height="112.7"/></clipPath>
<line x1="823.2" y1="653.5" x2="1452.14" y2="653.5" stroke="#4c4c4c" stroke-width="1"/>
<line x1="823.2" y1="624.5" x2="1452.14" y2="624.5" stroke="#4c4c4c" stroke-width="1"/>
<line x1="823.2" y1="596.5" x2="1452.14" y2="596.5" stroke="#4c4c4c" stroke-width="1"/>
<path d="M823.2 682.7L823.2 599.47L833.86 604.67L844.52 614.93L855.18 595.57L865.84 607.99L876.5 618.69L887.16 604.09L897.82 607.99L908.48 604.67L919.14 588.78L929.8 608.43L940.46 601.78L951.12 602.86L961.78 626.35L972.44 603.95L983.1 602.86L993.76 610.88L1004.42 607.99L1015.08 597.73L1025.74 598.89L1036.4 587.91L1047.06 598.89L1057.72 597.73L1068.38 587.91L1079.04 599.47L1089.7 597.01L1100.36 608.28L1111.02 599.61L1121.68 607.7L1132.34 607.7L1143 601.4L1153.66 625.19L1164.32 602.42L1174.98 619.7L1185.64 599.94L1196.3 633.57L1206.96 603.59L1217.62 610.88L1228.28 604.32L1238.94 599.47L1249.6 604.32L1260.26 597.73L1270.92 596.72L1281.58 601.78L1292.24 599.94L1302.9 587.91L1313.56 623.6L1324.22 604.32L1334.88 596.29L1345.54 592.68L1356.2 604.32L1366.86 610.59L1377.52 616L1388.18 580.97L1398.84 593.4L1409.5 601.12L1420.16 596.72L1430.82 603.3L1441.48 604.67L1452.14 598.89L1452.14 682.7Z" fill="rgba(65,89,57,0.5)" clip-path="url(#c2)"/>
<clipPath id="a2"><path d="M823.2 682.7L823.2 599.47L833.86 604.67L844.52 614.93L855.18 595.57L865.84 607.99L876.5 618.69L887.16 604.09L897.82 607.99L908.48 604.67L919.14 588.78L929.8 608.43L940.46 601.78L951.12 602.86L961.78 626.35L972.44 603.95L983.1 602.86L993.76 610.88L1004.42 607.99L1015.08 597.73L1025.74 598.89L1036.4 587.91L1047.06 598.89L1057.72 597.73L1068.38 587.91L1079.04 599.47L1089.7 597.01L1100.36 608.28L1111.02 599.61L1121.68 607.7L1132.34 607.7L1143 601.4L1153.66 625.19L1164.32 602.42L1174.98 619.7L1185.64 599.94L1196.3 633.57L1206.96 603.59L1217.62 610.88L1228.28 604.32L1238.94 599.47L1249.6 604.32L1260.26 597.73L1270.92 596.72L1281.58 601.78L1292.24 599.94L1302.9 587.91L1313.56 623.6L1324.22 604.32L1334.88 596.29L1345.54 592.68L1356.2 604.32L1366.86 610.59L1377.52 616L1388.18 580.97L1398.84 593.4L1409.5 601.12L1420.16 596.72L1430.82 603.3L1441.48 604.67L1452.14 598.89L1452.14 682.7Z"/></clipPath>
<line x1="823.2" y1="653.5" x2="1452.14" y2="653.5" stroke="#827828" stroke-width="1" opacity="0.380" clip-path="url(#a2)"/>
<line x1="823.2" y1="624.5" x2="1452.14" y2="624.5" stroke="#827828" stroke-width="1" opacity="0.380" clip-path="url(#a2)"/>
<line x1="823.2" y1="596.5" x2="1452.14" y2="596.5" stroke="#827828" stroke-width="1" opacity="0.380" clip-path="url(#a2)"/>
<line x1="908.5" y1="570" x2="908.5" y2="682.7" stroke="#ffffff" stroke-width="1" opacity="0.2"/>
<line x1="1015.5" y1="570" x2="1015.5" y2="682.7" stroke="#ffffff" stroke-width="1" opacity="0.2"/>
<line x1="1121.5" y1="570" x2="1121.5" y2="682.7" stroke="#ffffff" stroke-width="1" opacity="0.2"/>
<line x1="1228.5" y1="570" x2="1228.5" y2="682.7" stroke="#ffffff" stroke-width="1" opacity="0.2"/>
<line x1="1334.5" y1="570" x2="1334.5" y2="682.7" stroke="#ffffff" stroke-width="1" opacity="0.2"/>
<line x1="1441.5" y1="570" x2="1441.5" y2="682.7" stroke="#ffffff" stroke-width="1" opacity="0.07"/>
<path d="M823.2 599.47L833.86 604.67L844.52 614.93L855.18 595.57L865.84 607.99L876.5 618.69L887.16 604.09L897.82 607.99L908.48 604.67L919.14 588.78L929.8 608.43L940.46 601.78L951.12 602.86L961.78 626.35L972.44 603.95L983.1 602.86L993.76 610.88L1004.42 607.99L1015.08 597.73L1025.74 598.89L1036.4 587.91L1047.06 598.89L1057.72 597.73L1068.38 587.91L1079.04 599.47L1089.7 597.01L1100.36 608.28L1111.02 599.61L1121.68 607.7L1132.34 607.7L1143 601.4L1153.66 625.19L1164.32 602.42L1174.98 619.7L1185.64 599.94L1196.3 633.57L1206.96 603.59L1217.62 610.88L1228.28 604.32L1238.94 599.47L1249.6 604.32L1260.26 597.73L1270.92 596.72L1281.58 601.78L1292.24 599.94L1302.9 587.91L1313.56 623.6L1324.22 604.32L1334.88 596.29L1345.54 592.68L1356.2 604.32L1366.86 610.59L1377.52 616L1388.18 580.97L1398.84 593.4L1409.5 601.12L1420.16 596.72L1430.82 603.3L1441.48 604.67L1452.14 598.89" fill="none" stroke="#78ad58" stroke-width="1" stroke-linejoin="round" clip-path="url(#c2)"/>
<line x1="823.2" y1="570" x2="823.2" y2="682.7" stroke="#171717" stroke-width="1"/>
<text x="820.5" y="680.9" font-size="10.1" fill="#c4c4c4" font-weight="normal" text-anchor="end" textLength="5.67" lengthAdjust="spacingAndGlyphs">0</text>
<text x="820.5" y="657.9" font-size="10.1" fill="#c4c4c4" font-weight="normal" text-anchor="end" textLength="14" lengthAdjust="spacingAndGlyphs">0.2</text>
<text x="820.5" y="628.9" font-size="10.1" fill="#c4c4c4" font-weight="normal" text-anchor="end" textLength="14" lengthAdjust="spacingAndGlyphs">0.4</text>
<text x="820.5" y="600.2" font-size="10.1" fill="#c4c4c4" font-weight="normal" text-anchor="end" textLength="14" lengthAdjust="spacingAndGlyphs">0.6</text>
<text x="908.48" y="695.6" font-size="10.1" fill="#c4c4c4" font-weight="normal" text-anchor="middle" textLength="38.92" lengthAdjust="spacingAndGlyphs">21:55:10</text>
<text x="1015.08" y="695.6" font-size="10.1" fill="#c4c4c4" font-weight="normal" text-anchor="middle" textLength="38.92" lengthAdjust="spacingAndGlyphs">21:55:20</text>
<text x="1121.68" y="695.6" font-size="10.1" fill="#c4c4c4" font-weight="normal" text-anchor="middle" textLength="38.92" lengthAdjust="spacingAndGlyphs">21:55:30</text>
<text x="1228.28" y="695.6" font-size="10.1" fill="#c4c4c4" font-weight="normal" text-anchor="middle" textLength="38.92" lengthAdjust="spacingAndGlyphs">21:55:40</text>
<text x="1334.88" y="695.6" font-size="10.1" fill="#c4c4c4" font-weight="normal" text-anchor="middle" textLength="38.92" lengthAdjust="spacingAndGlyphs">21:55:50</text>
<text x="1443.18" y="695.6" font-size="10.1" fill="#c4c4c4" font-weight="normal" text-anchor="middle" textLength="25.13" lengthAdjust="spacingAndGlyphs">21:56</text>
<text transform="translate(790.1 635.3) rotate(-90)" font-size="13.400" fill="#747474" text-anchor="middle" textLength="34.22" lengthAdjust="spacingAndGlyphs">Score</text>
<text x="1113.8" y="561" font-size="13.75" fill="#8c8c8c" font-weight="bold" text-anchor="middle" textLength="77.63" lengthAdjust="spacingAndGlyphs">Apdex Score</text>
<clipPath id="c3"><rect x="122.8" y="741" width="629.18" height="112.5"/></clipPath>
<line x1="122.3" y1="821.5" x2="751.48" y2="821.5" stroke="#4c4c4c" stroke-width="1"/>
<line x1="122.3" y1="790.5" x2="751.48" y2="790.5" stroke="#4c4c4c" stroke-width="1"/>
<line x1="122.3" y1="758.5" x2="751.48" y2="758.5" stroke="#4c4c4c" stroke-width="1"/>
<path d="M122.3 853.5L122.3 754.91L132.96 754.91L143.63 754.91L154.29 754.91L164.96 754.91L175.62 754.91L186.28 754.91L196.95 754.91L207.61 753.96L218.28 753.96L228.94 753.96L239.6 753.96L250.27 753.96L260.93 753.96L271.6 753.96L282.26 753.96L292.92 753.96L303.59 753.57L314.25 753.17L324.92 753.17L335.58 753.17L346.24 753.17L356.91 753.17L367.57 753.17L378.24 753.17L388.9 753.17L399.56 751.75L410.23 751.75L420.89 751.75L431.56 751.75L442.22 753.17L452.88 753.16L463.55 753.15L474.21 753.14L484.88 753.13L495.54 753.12L506.2 753.1L516.87 753.09L527.53 753.08L538.2 753.07L548.86 753.06L559.52 753.05L570.19 753.04L580.85 753.03L591.52 753.02L602.18 753.01L612.84 753L623.51 752.98L634.17 752.97L644.84 752.96L655.5 752.95L666.16 752.94L676.83 752.93L687.49 752.92L698.16 752.91L708.82 752.9L719.48 752.89L730.15 752.88L740.81 752.86L751.48 752.85L751.48 853.5Z" fill="rgba(65,89,57,0.5)" clip-path="url(#c3)"/>
<path d="M122.3 853.5L122.3 813.37L132.96 810.66L143.63 807.95L154.29 805.24L164.96 802.53L175.62 799.83L186.28 797.12L196.95 794.41L207.61 803.73L218.28 811.79L228.94 809.15L239.6 806.51L250.27 803.87L260.93 801.22L271.6 798.58L282.26 795.94L292.92 793.3L303.59 805.63L314.25 808.79L324.92 806.02L335.58 803.26L346.24 800.49L356.91 797.73L367.57 794.96L378.24 792.2L388.9 796.15L399.56 809.26L410.23 806.14L420.89 803.02L431.56 818.74L442.22 817.63L452.88 815.26L463.55 812.89L474.21 810.52L484.88 808.15L495.54 805.78L506.2 803.41L516.87 803.57L527.53 820.64L538.2 818.12L548.86 815.6L559.52 813.09L570.19 810.57L580.85 808.05L591.52 805.54L602.18 803.02L612.84 806.26L623.51 818.74L634.17 816.08L644.84 813.41L655.5 810.75L666.16 808.09L676.83 805.42L687.49 802.76L698.16 800.1L708.82 807.05L719.48 817L730.15 813.79L740.81 810.58L751.48 807.36L751.48 853.5Z" fill="rgba(104,103,55,0.6)" clip-path="url(#c3)"/>
<clipPath id="a3"><path d="M122.3 853.5L122.3 754.91L132.96 754.91L143.63 754.91L154.29 754.91L164.96 754.91L175.62 754.91L186.28 754.91L196.95 754.91L207.61 753.96L218.28 753.96L228.94 753.96L239.6 753.96L250.27 753.96L260.93 753.96L271.6 753.96L282.26 753.96L292.92 753.96L303.59 753.57L314.25 753.17L324.92 753.17L335.58 753.17L346.24 753.17L356.91 753.17L367.57 753.17L378.24 753.17L388.9 753.17L399.56 751.75L410.23 751.75L420.89 751.75L431.56 751.75L442.22 753.17L452.88 753.16L463.55 753.15L474.21 753.14L484.88 753.13L495.54 753.12L506.2 753.1L516.87 753.09L527.53 753.08L538.2 753.07L548.86 753.06L559.52 753.05L570.19 753.04L580.85 753.03L591.52 753.02L602.18 753.01L612.84 753L623.51 752.98L634.17 752.97L644.84 752.96L655.5 752.95L666.16 752.94L676.83 752.93L687.49 752.92L698.16 752.91L708.82 752.9L719.48 752.89L730.15 752.88L740.81 752.86L751.48 752.85L751.48 853.5Z"/></clipPath>
<line x1="122.3" y1="758.5" x2="751.48" y2="758.5" stroke="#827828" stroke-width="1" opacity="0.380" clip-path="url(#a3)"/>
<line x1="207.5" y1="741" x2="207.5" y2="853.5" stroke="#ffffff" stroke-width="1" opacity="0.2"/>
<line x1="314.5" y1="741" x2="314.5" y2="853.5" stroke="#ffffff" stroke-width="1" opacity="0.2"/>
<line x1="420.5" y1="741" x2="420.5" y2="853.5" stroke="#ffffff" stroke-width="1" opacity="0.2"/>
<line x1="527.5" y1="741" x2="527.5" y2="853.5" stroke="#ffffff" stroke-width="1" opacity="0.2"/>
<line x1="634.5" y1="741" x2="634.5" y2="853.5" stroke="#ffffff" stroke-width="1" opacity="0.2"/>
<line x1="740.5" y1="741" x2="740.5" y2="853.5" stroke="#ffffff" stroke-width="1" opacity="0.07"/>
<path d="M122.3 754.91L132.96 754.91L143.63 754.91L154.29 754.91L164.96 754.91L175.62 754.91L186.28 754.91L196.95 754.91L207.61 753.96L218.28 753.96L228.94 753.96L239.6 753.96L250.27 753.96L260.93 753.96L271.6 753.96L282.26 753.96L292.92 753.96L303.59 753.57L314.25 753.17L324.92 753.17L335.58 753.17L346.24 753.17L356.91 753.17L367.57 753.17L378.24 753.17L388.9 753.17L399.56 751.75L410.23 751.75L420.89 751.75L431.56 751.75L442.22 753.17L452.88 753.16L463.55 753.15L474.21 753.14L484.88 753.13L495.54 753.12L506.2 753.1L516.87 753.09L527.53 753.08L538.2 753.07L548.86 753.06L559.52 753.05L570.19 753.04L580.85 753.03L591.52 753.02L602.18 753.01L612.84 753L623.51 752.98L634.17 752.97L644.84 752.96L655.5 752.95L666.16 752.94L676.83 752.93L687.49 752.92L698.16 752.91L708.82 752.9L719.48 752.89L730.15 752.88L740.81 752.86L751.48 752.85" fill="none" stroke="#78ad58" stroke-width="1" stroke-linejoin="round" clip-path="url(#c3)"/>
<path d="M122.3 813.37L132.96 810.66L143.63 807.95L154.29 805.24L164.96 802.53L175.62 799.83L186.28 797.12L196.95 794.41L207.61 803.73L218.28 811.79L228.94 809.15L239.6 806.51L250.27 803.87L260.93 801.22L271.6 798.58L282.26 795.94L292.92 793.3L303.59 805.63L314.25 808.79L324.92 806.02L335.58 803.26L346.24 800.49L356.91 797.73L367.57 794.96L378.24 792.2L388.9 796.15L399.56 809.26L410.23 806.14L420.89 803.02L431.56 818.74L442.22 817.63L452.88 815.26L463.55 812.89L474.21 810.52L484.88 808.15L495.54 805.78L506.2 803.41L516.87 803.57L527.53 820.64L538.2 818.12L548.86 815.6L559.52 813.09L570.19 810.57L580.85 808.05L591.52 805.54L602.18 803.02L612.84 806.26L623.51 818.74L634.17 816.08L644.84 813.41L655.5 810.75L666.16 808.09L676.83 805.42L687.49 802.76L698.16 800.1L708.82 807.05L719.48 817L730.15 813.79L740.81 810.58L751.48 807.36" fill="none" stroke="#dcab1f" stroke-width="1" stroke-linejoin="round" clip-path="url(#c3)"/>
<line x1="122.3" y1="741" x2="122.3" y2="853.5" stroke="#171717" stroke-width="1"/>
<text x="119.5" y="851.2" font-size="10.1" fill="#c4c4c4" font-weight="normal" text-anchor="end" textLength="5.67" lengthAdjust="spacingAndGlyphs">0</text>
<text x="119.5" y="825.9" font-size="10.1" fill="#c4c4c4" font-weight="normal" text-anchor="end" textLength="11.34" lengthAdjust="spacingAndGlyphs">20</text>
<text x="119.5" y="794.4" font-size="10.1" fill="#c4c4c4" font-weight="normal" text-anchor="end" textLength="11.34" lengthAdjust="spacingAndGlyphs">40</text>
<text x="119.5" y="762.9" font-size="10.1" fill="#c4c4c4" font-weight="normal" text-anchor="end" textLength="11.34" lengthAdjust="spacingAndGlyphs">60</text>
<text x="207.61" y="866.4" font-size="10.1" fill="#c4c4c4" font-weight="normal" text-anchor="middle" textLength="38.92" lengthAdjust="spacingAndGlyphs">21:55:10</text>
<text x="314.25" y="866.4" font-size="10.1" fill="#c4c4c4" font-weight="normal" text-anchor="middle" textLength="38.92" lengthAdjust="spacingAndGlyphs">21:55:20</text>
<text x="420.89" y="866.4" font-size="10.1" fill="#c4c4c4" font-weight="normal" text-anchor="middle" textLength="38.92" lengthAdjust="spacingAndGlyphs">21:55:30</text>
<text x="527.53" y="866.4" font-size="10.1" fill="#c4c4c4" font-weight="normal" text-anchor="middle" textLength="38.92" lengthAdjust="spacingAndGlyphs">21:55:40</text>
<text x="634.17" y="866.4" font-size="10.1" fill="#c4c4c4" font-weight="normal" text-anchor="middle" textLength="38.92" lengthAdjust="spacingAndGlyphs">21:55:50</text>
<text x="742.51" y="866.4" font-size="10.1" fill="#c4c4c4" font-weight="normal" text-anchor="middle" textLength="25.13" lengthAdjust="spacingAndGlyphs">21:56</text>
<text transform="translate(88.7 806.1) rotate(-90)" font-size="13.400" fill="#747474" text-anchor="middle" textLength="20.05" lengthAdjust="spacingAndGlyphs">MB</text>
<text x="413.2" y="732" font-size="13.75" fill="#8c8c8c" font-weight="bold" text-anchor="middle" textLength="50.69" lengthAdjust="spacingAndGlyphs">Memory</text>
<clipPath id="c4"><rect x="823.7" y="741" width="628.94" height="112.5"/></clipPath>
<line x1="823.2" y1="821.5" x2="1452.14" y2="821.5" stroke="#4c4c4c" stroke-width="1"/>
<line x1="823.2" y1="789.5" x2="1452.14" y2="789.5" stroke="#4c4c4c" stroke-width="1"/>
<line x1="823.2" y1="757.5" x2="1452.14" y2="757.5" stroke="#4c4c4c" stroke-width="1"/>
<path d="M823.2 853.5L823.2 827.22L833.86 772.41L844.52 826.39L855.18 828.5L865.84 808.37L876.5 825.65L887.16 782.7L897.82 828.14L908.48 839.72L919.14 827.7L929.8 749.72L940.46 789.3L951.12 827.41L961.78 825.65L972.44 840.04L983.1 796.64L993.76 812.03L1004.42 828.44L1015.08 825.65L1025.74 837.38L1036.4 826.67L1047.06 785.63L1057.72 827.12L1068.38 810.1L1079.04 825.94L1089.7 827.7L1100.36 827.12L1111.02 829.14L1121.68 761.45L1132.34 813.76L1143 815.39L1153.66 817.44L1164.32 782.41L1174.98 826.39L1185.64 828.14L1196.3 829.61L1206.96 827.7L1217.62 825.65L1228.28 825.23L1238.94 840.17L1249.6 826.67L1260.26 822.73L1270.92 783.14L1281.58 826.67L1292.24 828.44L1302.9 813.05L1313.56 828.57L1324.22 825.23L1334.88 828.14L1345.54 827.7L1356.2 828.44L1366.86 826.26L1377.52 790.04L1388.18 829.61L1398.84 827.12L1409.5 816.13L1420.16 825.94L1430.82 835.04L1441.48 827.41L1452.14 853.18L1452.14 853.5Z" fill="rgba(65,89,57,0.5)" clip-path="url(#c4)"/>
<clipPath id="a4"><path d="M823.2 853.5L823.2 827.22L833.86 772.41L844.52 826.39L855.18 828.5L865.84 808.37L876.5 825.65L887.16 782.7L897.82 828.14L908.48 839.72L919.14 827.7L929.8 749.72L940.46 789.3L951.12 827.41L961.78 825.65L972.44 840.04L983.1 796.64L993.76 812.03L1004.42 828.44L1015.08 825.65L1025.74 837.38L1036.4 826.67L1047.06 785.63L1057.72 827.12L1068.38 810.1L1079.04 825.94L1089.7 827.7L1100.36 827.12L1111.02 829.14L1121.68 761.45L1132.34 813.76L1143 815.39L1153.66 817.44L1164.32 782.41L1174.98 826.39L1185.64 828.14L1196.3 829.61L1206.96 827.7L1217.62 825.65L1228.28 825.23L1238.94 840.17L1249.6 826.67L1260.26 822.73L1270.92 783.14L1281.58 826.67L1292.24 828.44L1302.9 813.05L1313.56 828.57L1324.22 825.23L1334.88 828.14L1345.54 827.7L1356.2 828.44L1366.86 826.26L1377.52 790.04L1388.18 829.61L1398.84 827.12L1409.5 816.13L1420.16 825.94L1430.82 835.04L1441.48 827.41L1452.14 853.18L1452.14 853.5Z"/></clipPath>
<line x1="823.2" y1="821.5" x2="1452.14" y2="821.5" stroke="#827828" stroke-width="1" opacity="0.380" clip-path="url(#a4)"/>
<line x1="823.2" y1="789.5" x2="1452.14" y2="789.5" stroke="#827828" stroke-width="1" opacity="0.380" clip-path="url(#a4)"/>
<line x1="823.2" y1="757.5" x2="1452.14" y2="757.5" stroke="#827828" stroke-width="1" opacity="0.380" clip-path="url(#a4)"/>
<line x1="908.5" y1="741" x2="908.5" y2="853.5" stroke="#ffffff" stroke-width="1" opacity="0.2"/>
<line x1="1015.5" y1="741" x2="1015.5" y2="853.5" stroke="#ffffff" stroke-width="1" opacity="0.2"/>
<line x1="1121.5" y1="741" x2="1121.5" y2="853.5" stroke="#ffffff" stroke-width="1" opacity="0.2"/>
<line x1="1228.5" y1="741" x2="1228.5" y2="853.5" stroke="#ffffff" stroke-width="1" opacity="0.2"/>
<line x1="1334.5" y1="741" x2="1334.5" y2="853.5" stroke="#ffffff" stroke-width="1" opacity="0.2"/>
<line x1="1441.5" y1="741" x2="1441.5" y2="853.5" stroke="#ffffff" stroke-width="1" opacity="0.07"/>
<path d="M823.2 827.22L833.86 772.41L844.52 826.39L855.18 828.5L865.84 808.37L876.5 825.65L887.16 782.7L897.82 828.14L908.48 839.72L919.14 827.7L929.8 749.72L940.46 789.3L951.12 827.41L961.78 825.65L972.44 840.04L983.1 796.64L993.76 812.03L1004.42 828.44L1015.08 825.65L1025.74 837.38L1036.4 826.67L1047.06 785.63L1057.72 827.12L1068.38 810.1L1079.04 825.94L1089.7 827.7L1100.36 827.12L1111.02 829.14L1121.68 761.45L1132.34 813.76L1143 815.39L1153.66 817.44L1164.32 782.41L1174.98 826.39L1185.64 828.14L1196.3 829.61L1206.96 827.7L1217.62 825.65L1228.28 825.23L1238.94 840.17L1249.6 826.67L1260.26 822.73L1270.92 783.14L1281.58 826.67L1292.24 828.44L1302.9 813.05L1313.56 828.57L1324.22 825.23L1334.88 828.14L1345.54 827.7L1356.2 828.44L1366.86 826.26L1377.52 790.04L1388.18 829.61L1398.84 827.12L1409.5 816.13L1420.16 825.94L1430.82 835.04L1441.48 827.41L1452.14 853.18" fill="none" stroke="#78ad58" stroke-width="1" stroke-linejoin="round" clip-path="url(#c4)"/>
<line x1="823.2" y1="741" x2="823.2" y2="853.5" stroke="#171717" stroke-width="1"/>
<text x="820.5" y="851.2" font-size="10.1" fill="#c4c4c4" font-weight="normal" text-anchor="end" textLength="5.67" lengthAdjust="spacingAndGlyphs">0</text>
<text x="820.5" y="825.9" font-size="10.1" fill="#c4c4c4" font-weight="normal" text-anchor="end" textLength="14" lengthAdjust="spacingAndGlyphs">0.5</text>
<text x="820.5" y="793.9" font-size="10.1" fill="#c4c4c4" font-weight="normal" text-anchor="end" textLength="5.67" lengthAdjust="spacingAndGlyphs">1</text>
<text x="820.5" y="762.1" font-size="10.1" fill="#c4c4c4" font-weight="normal" text-anchor="end" textLength="14" lengthAdjust="spacingAndGlyphs">1.5</text>
<text x="908.48" y="866.4" font-size="10.1" fill="#c4c4c4" font-weight="normal" text-anchor="middle" textLength="38.92" lengthAdjust="spacingAndGlyphs">21:55:10</text>
<text x="1015.08" y="866.4" font-size="10.1" fill="#c4c4c4" font-weight="normal" text-anchor="middle" textLength="38.92" lengthAdjust="spacingAndGlyphs">21:55:20</text>
<text x="1121.68" y="866.4" font-size="10.1" fill="#c4c4c4" font-weight="normal" text-anchor="middle" textLength="38.92" lengthAdjust="spacingAndGlyphs">21:55:30</text>
<text x="1228.28" y="866.4" font-size="10.1" fill="#c4c4c4" font-weight="normal" text-anchor="middle" textLength="38.92" lengthAdjust="spacingAndGlyphs">21:55:40</text>
<text x="1334.88" y="866.4" font-size="10.1" fill="#c4c4c4" font-weight="normal" text-anchor="middle" textLength="38.92" lengthAdjust="spacingAndGlyphs">21:55:50</text>
<text x="1443.18" y="866.4" font-size="10.1" fill="#c4c4c4" font-weight="normal" text-anchor="middle" textLength="25.13" lengthAdjust="spacingAndGlyphs">21:56</text>
<text transform="translate(790.1 806.1) rotate(-90)" font-size="13.400" fill="#747474" text-anchor="middle" textLength="32.76" lengthAdjust="spacingAndGlyphs">msec</text>
<text x="1113.8" y="732" font-size="13.75" fill="#8c8c8c" font-weight="bold" text-anchor="middle" textLength="94.72" lengthAdjust="spacingAndGlyphs">Event Loop Lag</text>
</svg>
</body></html>
